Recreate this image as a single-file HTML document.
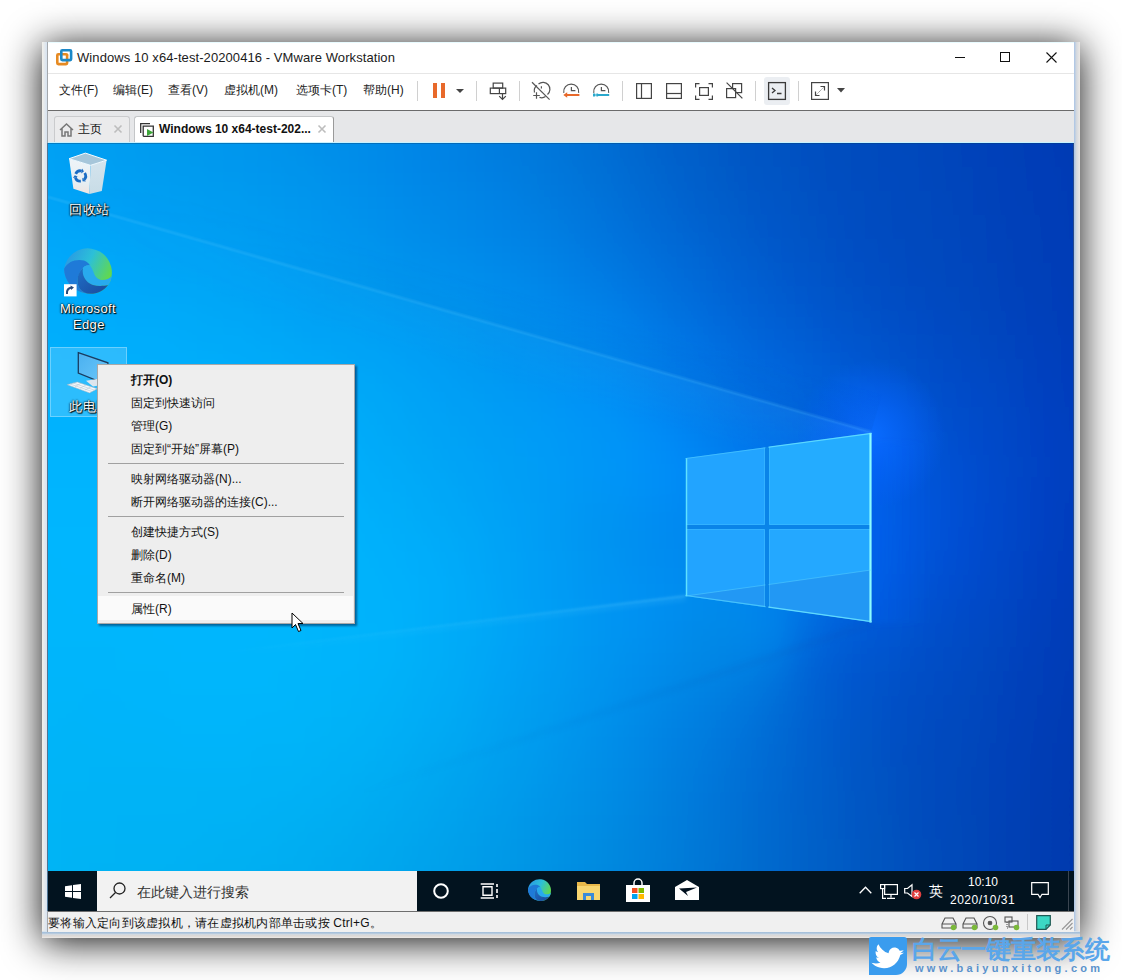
<!DOCTYPE html>
<html><head><meta charset="utf-8">
<style>
*{margin:0;padding:0;box-sizing:border-box}
html,body{width:1122px;height:980px;overflow:hidden;background:#fff;font-family:"Liberation Sans",sans-serif;color:#000;}
.a{position:absolute}
.t{position:absolute;white-space:nowrap;line-height:1}
svg{position:absolute;overflow:visible}
</style></head>
<body>
<div class="a" style="left:42px;top:42px;width:1038px;height:896px;box-shadow:0 4px 36px 0 rgba(0,0,0,0.95);"></div>
<!-- window frame -->
<div class="a" style="left:42px;top:42px;width:1038px;height:896px;background:#e9edf2;"></div>
<div class="a" style="left:42px;top:42px;width:5px;height:896px;background:linear-gradient(90deg,#f2f0ea,#d6e2f0);"></div>
<div class="a" style="left:1074px;top:42px;width:6px;height:896px;background:linear-gradient(90deg,#a9c4e6,#d3d8de 40%,#ece8e4);"></div>
<div class="a" style="left:42px;top:931px;width:1038px;height:7px;background:linear-gradient(180deg,#f0f4f8,#9ab8d6 25%,#cfd9e3 45%,#ddd8d4 70%,#ebe9e7);"></div>
<!-- title bar -->
<div class="a" style="left:47px;top:42px;width:1027px;height:31px;background:#fff;border-top:1px solid #e8fbff;"></div>
<svg style="left:55px;top:48px" width="19" height="19" viewBox="0 0 19 19">
  <rect x="2.3" y="6.3" width="9.8" height="9.8" rx="1" fill="none" stroke="#e68a22" stroke-width="2.6"/>
  <rect x="6.3" y="2.3" width="9.8" height="9.8" rx="1" fill="none" stroke="#1b88c8" stroke-width="2.6"/>
  <path d="M12.1 6.3 V7.5" stroke="#e68a22" stroke-width="2.6"/>
</svg>
<div class="t" style="left:77px;top:51px;font-size:13px;letter-spacing:0.08px;color:#1b1b1b;">Windows 10 x64-test-20200416 - VMware Workstation</div>
<div class="a" style="left:955px;top:57px;width:10px;height:1px;background:#111;"></div>
<div class="a" style="left:1000px;top:52px;width:10px;height:10px;border:1px solid #111;"></div>
<svg style="left:1046px;top:52px" width="11" height="11" viewBox="0 0 11 11"><path d="M0.5 0.5 L10.5 10.5 M10.5 0.5 L0.5 10.5" stroke="#111" stroke-width="1.1"/></svg>
<!-- toolbar -->
<div class="a" style="left:47px;top:73px;width:1027px;height:38px;background:#fff;border-top:1px solid #e6e6e6;border-bottom:1px solid #6b6b6b;"></div>
<div class="t" style="left:59px;top:84px;font-size:12px;color:#222;">文件(F)</div>
<div class="t" style="left:113px;top:84px;font-size:12px;color:#222;">编辑(E)</div>
<div class="t" style="left:168px;top:84px;font-size:12px;color:#222;">查看(V)</div>
<div class="t" style="left:224px;top:84px;font-size:12px;color:#222;">虚拟机(M)</div>
<div class="t" style="left:296px;top:84px;font-size:12px;color:#222;">选项卡(T)</div>
<div class="t" style="left:363px;top:84px;font-size:12px;color:#222;">帮助(H)</div>
<div class="a" style="left:417px;top:81px;width:1px;height:20px;background:#d0d0d0;"></div>
<div class="a" style="left:433px;top:83px;width:4px;height:15px;background:#e8692a;"></div>
<div class="a" style="left:441px;top:83px;width:4px;height:15px;background:#e8692a;"></div>
<svg style="left:456px;top:89px" width="8" height="4" viewBox="0 0 8 4"><path d="M0 0 H8 L4 4z" fill="#444"/></svg>
<div class="a" style="left:476px;top:81px;width:1px;height:20px;background:#d0d0d0;"></div>
<svg style="left:486px;top:80px" width="22" height="22" viewBox="0 0 22 22" fill="none" stroke="#444" stroke-width="1.2">
  <rect x="7.2" y="3.1" width="9.5" height="5"/><rect x="4.3" y="8.1" width="15.4" height="5.5"/><path d="M13.4 8.1 V13.6 M16.5 13.6 V19.7 M13.2 16.2 L16.5 19.5 L19.8 16.2"/>
</svg>
<div class="a" style="left:519px;top:81px;width:1px;height:20px;background:#d0d0d0;"></div>
<svg style="left:528px;top:78px" width="26" height="24" viewBox="0 0 26 24" fill="none" stroke="#555" stroke-width="1.2">
  <path d="M6.5 14.5 A6.6 6.6 0 0 1 9 7.5 M10.5 6 A6.6 6.6 0 0 1 19.5 16.5 M17.5 18.6 A6.6 6.6 0 0 1 11.5 19.4"/><path d="M13.4 8.3 V10.5 M16.2 13.4 L16.3 13.4"/><path d="M8.5 14.2 V20.8 M5.2 17.5 H11.8"/><path d="M4 4.2 L21.6 21.6"/>
</svg>
<svg style="left:562px;top:83px" width="18" height="16" viewBox="0 0 18 16" fill="none">
  <path d="M1.8 9.8 A7.5 7.5 0 1 1 16.6 9.8" stroke="#555" stroke-width="1.2"/><path d="M9.4 4 V7.7 H13.4" stroke="#555" stroke-width="1.2"/>
  <path d="M1.3 12 L5.2 9.2 V10.9 H17.4 V13.1 H5.2 V14.8z" fill="#e8692a"/>
</svg>
<svg style="left:592px;top:83px" width="18" height="16" viewBox="0 0 18 16" fill="none">
  <path d="M1.8 9.8 A7.5 7.5 0 1 1 16.6 9.8" stroke="#555" stroke-width="1.2"/><path d="M9.4 4 V7.7 H13.4" stroke="#555" stroke-width="1.2"/>
  <path d="M1 10.4 H3.2 V11.6 H4.4 V10.6 H5.6 L6.4 10.9 H17.2 V13.1 H6.4 L5.6 13.4 H4.4 V12.4 H3.2 V13.6 H1z" fill="#2aa8cc"/>
</svg>
<div class="a" style="left:622px;top:81px;width:1px;height:20px;background:#d0d0d0;"></div>
<svg style="left:636px;top:83px" width="16" height="16" viewBox="0 0 16 16" fill="none" stroke="#444" stroke-width="1.2"><rect x="0.6" y="0.6" width="14.8" height="14.8"/><path d="M5.5 0.6 V15.4"/></svg>
<svg style="left:666px;top:83px" width="16" height="16" viewBox="0 0 16 16" fill="none" stroke="#444" stroke-width="1.2"><rect x="0.6" y="0.6" width="14.8" height="14.8"/><path d="M0.6 10.5 H15.4"/></svg>
<svg style="left:695px;top:83px" width="18" height="17" viewBox="0 0 18 17" fill="none" stroke="#444" stroke-width="1.2"><path d="M0.6 4.5 V0.6 H4.5 M13.5 0.6 H17.4 V4.5 M17.4 12.5 V16.4 H13.5 M4.5 16.4 H0.6 V12.5"/><rect x="4.6" y="4.6" width="8.8" height="7.8"/></svg>
<svg style="left:726px;top:82px" width="17" height="17" viewBox="0 0 17 17" fill="none" stroke="#444" stroke-width="1.2"><rect x="6.6" y="1.6" width="9" height="9"/><rect x="0.6" y="6.6" width="9" height="9" fill="#fff"/><path d="M0.6 0.6 L16.4 16.4"/></svg>
<div class="a" style="left:755px;top:81px;width:1px;height:20px;background:#d0d0d0;"></div>
<div class="a" style="left:764px;top:77px;width:26px;height:28px;background:#ebeef2;border-radius:3px;"></div>
<svg style="left:768px;top:82px" width="18" height="18" viewBox="0 0 18 18" fill="none" stroke="#3a3a3a" stroke-width="1.3"><rect x="0.6" y="0.6" width="16.8" height="16.8"/><path d="M4 6 L7 8.5 L4 11 M9 11.5 H13.5"/></svg>
<div class="a" style="left:798px;top:81px;width:1px;height:20px;background:#d0d0d0;"></div>
<svg style="left:811px;top:82px" width="18" height="18" viewBox="0 0 18 18" fill="none" stroke="#444" stroke-width="1.2"><rect x="0.6" y="0.6" width="16.8" height="16.8"/><path d="M5.5 12.5 L12.5 5.5" stroke="#888" stroke-width="1" stroke-dasharray="1.2 0.6"/><path d="M9.5 4.5 H13.5 V8.5 M4.5 9.5 V13.5 H8.5"/></svg>
<svg style="left:837px;top:88px" width="8" height="5" viewBox="0 0 8 5"><path d="M0 0 H8 L4 4.5z" fill="#444"/></svg>
<!-- tab strip -->
<div class="a" style="left:47px;top:111px;width:1027px;height:32px;background:#e6e7e9;"></div>
<div class="a" style="left:54px;top:116px;width:76px;height:27px;background:#ebebec;border:1px solid #cacbcd;border-bottom:none;border-radius:3px 3px 0 0;"></div>
<svg style="left:59px;top:123px" width="15" height="14" viewBox="0 0 15 14" fill="none" stroke="#777" stroke-width="1.5"><path d="M1 7 L7.5 1 L14 7 M3 5.5 V13 H6 V9 H9 V13 H12 V5.5"/></svg>
<div class="t" style="left:78px;top:123px;font-size:12px;color:#111;">主页</div>
<svg style="left:114px;top:125px" width="8" height="8" viewBox="0 0 8 8"><path d="M0.5 0.5 L7.5 7.5 M7.5 0.5 L0.5 7.5" stroke="#bdbdbd" stroke-width="1.6"/></svg>
<div class="a" style="left:134px;top:116px;width:200px;height:27px;background:#fff;border:1px solid #c4c6c8;border-right-color:#9a9a9a;border-bottom:none;border-radius:3px 3px 0 0;"></div>
<svg style="left:140px;top:123px" width="15" height="14" viewBox="0 0 15 14" fill="none"><path d="M0.7 10 V0.7 H10" stroke="#333" stroke-width="1.3"/><path d="M3.2 13.3 V3.2 H13.3 V13.3 H3.2" stroke="#333" stroke-width="1.3"/><path d="M7 6 L13.5 9.5 L7 13z" fill="#3da53a"/></svg>
<div class="t" style="left:159px;top:123px;font-size:12px;font-weight:bold;color:#111;">Windows 10 x64-test-202...</div>
<svg style="left:318px;top:125px" width="8" height="8" viewBox="0 0 8 8"><path d="M0.5 0.5 L7.5 7.5 M7.5 0.5 L0.5 7.5" stroke="#bdbdbd" stroke-width="1.6"/></svg>

<div class="a" style="left:47px;top:42px;width:1px;height:101px;background:#a4a8ac;"></div>
<div class="a" style="left:47px;top:143px;width:1px;height:768px;background:#4f7594;"></div>
<div class="a" style="left:47px;top:911px;width:1px;height:21px;background:#a4a8ac;"></div>
<div class="a" style="left:48px;top:143px;width:1026px;height:728px;overflow:hidden;">
<svg width="1026" height="728" viewBox="0 0 1026 728" style="left:0;top:0">
<defs><linearGradient id="r0" gradientUnits="userSpaceOnUse" x1="0" y1="0" x2="1026" y2="0"><stop offset="0.000" stop-color="#01a0f4"/><stop offset="0.026" stop-color="#009ff2"/><stop offset="0.053" stop-color="#009df1"/><stop offset="0.079" stop-color="#009cf0"/><stop offset="0.105" stop-color="#009aee"/><stop offset="0.132" stop-color="#0099ed"/><stop offset="0.158" stop-color="#0097ed"/><stop offset="0.184" stop-color="#0096ec"/><stop offset="0.211" stop-color="#0094eb"/><stop offset="0.237" stop-color="#0092ea"/><stop offset="0.263" stop-color="#008fe9"/><stop offset="0.289" stop-color="#008de9"/><stop offset="0.316" stop-color="#018ae8"/><stop offset="0.342" stop-color="#0187e7"/><stop offset="0.368" stop-color="#0184e5"/><stop offset="0.395" stop-color="#0181e3"/><stop offset="0.421" stop-color="#007ee0"/><stop offset="0.447" stop-color="#007bde"/><stop offset="0.474" stop-color="#0078db"/><stop offset="0.500" stop-color="#0074d8"/><stop offset="0.526" stop-color="#006fd5"/><stop offset="0.553" stop-color="#016bd1"/><stop offset="0.579" stop-color="#0266ce"/><stop offset="0.605" stop-color="#0362cb"/><stop offset="0.632" stop-color="#035dc8"/><stop offset="0.658" stop-color="#0359c5"/><stop offset="0.684" stop-color="#0356c3"/><stop offset="0.711" stop-color="#0353c1"/><stop offset="0.737" stop-color="#0250c0"/><stop offset="0.763" stop-color="#034dbf"/><stop offset="0.789" stop-color="#034bbd"/><stop offset="0.816" stop-color="#0349bc"/><stop offset="0.842" stop-color="#0447bb"/><stop offset="0.868" stop-color="#0445ba"/><stop offset="0.895" stop-color="#0443b9"/><stop offset="0.921" stop-color="#0441b8"/><stop offset="0.947" stop-color="#043eb7"/><stop offset="0.974" stop-color="#043cb6"/><stop offset="1.000" stop-color="#0439b4"/></linearGradient><linearGradient id="r1" gradientUnits="userSpaceOnUse" x1="0" y1="0" x2="1026" y2="0"><stop offset="0.000" stop-color="#01a0f4"/><stop offset="0.026" stop-color="#009ff2"/><stop offset="0.053" stop-color="#009df1"/><stop offset="0.079" stop-color="#009cf0"/><stop offset="0.105" stop-color="#009aee"/><stop offset="0.132" stop-color="#0099ed"/><stop offset="0.158" stop-color="#0097ed"/><stop offset="0.184" stop-color="#0096ec"/><stop offset="0.211" stop-color="#0094eb"/><stop offset="0.237" stop-color="#0092ea"/><stop offset="0.263" stop-color="#008fe9"/><stop offset="0.289" stop-color="#008de9"/><stop offset="0.316" stop-color="#018ae8"/><stop offset="0.342" stop-color="#0187e7"/><stop offset="0.368" stop-color="#0184e5"/><stop offset="0.395" stop-color="#0181e3"/><stop offset="0.421" stop-color="#007ee0"/><stop offset="0.447" stop-color="#007bde"/><stop offset="0.474" stop-color="#0078db"/><stop offset="0.500" stop-color="#0074d8"/><stop offset="0.526" stop-color="#006fd5"/><stop offset="0.553" stop-color="#016bd1"/><stop offset="0.579" stop-color="#0266ce"/><stop offset="0.605" stop-color="#0362cb"/><stop offset="0.632" stop-color="#035dc8"/><stop offset="0.658" stop-color="#0359c5"/><stop offset="0.684" stop-color="#0356c3"/><stop offset="0.711" stop-color="#0353c1"/><stop offset="0.737" stop-color="#0250c0"/><stop offset="0.763" stop-color="#034dbf"/><stop offset="0.789" stop-color="#034bbd"/><stop offset="0.816" stop-color="#0349bc"/><stop offset="0.842" stop-color="#0447bb"/><stop offset="0.868" stop-color="#0445ba"/><stop offset="0.895" stop-color="#0443b9"/><stop offset="0.921" stop-color="#0441b8"/><stop offset="0.947" stop-color="#043eb7"/><stop offset="0.974" stop-color="#043cb6"/><stop offset="1.000" stop-color="#0439b4"/></linearGradient><linearGradient id="r2" gradientUnits="userSpaceOnUse" x1="0" y1="0" x2="1026" y2="0"><stop offset="0.000" stop-color="#01a1f4"/><stop offset="0.026" stop-color="#009ff3"/><stop offset="0.053" stop-color="#009ef2"/><stop offset="0.079" stop-color="#009df0"/><stop offset="0.105" stop-color="#009bef"/><stop offset="0.132" stop-color="#009aee"/><stop offset="0.158" stop-color="#0098ee"/><stop offset="0.184" stop-color="#0097ed"/><stop offset="0.211" stop-color="#0095ec"/><stop offset="0.237" stop-color="#0093eb"/><stop offset="0.263" stop-color="#0090ea"/><stop offset="0.289" stop-color="#008ee9"/><stop offset="0.316" stop-color="#018be8"/><stop offset="0.342" stop-color="#0188e7"/><stop offset="0.368" stop-color="#0185e6"/><stop offset="0.395" stop-color="#0182e4"/><stop offset="0.421" stop-color="#007fe1"/><stop offset="0.447" stop-color="#007cdf"/><stop offset="0.474" stop-color="#0079dc"/><stop offset="0.500" stop-color="#0075d9"/><stop offset="0.526" stop-color="#0071d6"/><stop offset="0.553" stop-color="#016cd3"/><stop offset="0.579" stop-color="#0267cf"/><stop offset="0.605" stop-color="#0362cc"/><stop offset="0.632" stop-color="#035ec9"/><stop offset="0.658" stop-color="#035ac6"/><stop offset="0.684" stop-color="#0356c4"/><stop offset="0.711" stop-color="#0253c2"/><stop offset="0.737" stop-color="#0250c1"/><stop offset="0.763" stop-color="#024ebf"/><stop offset="0.789" stop-color="#034cbe"/><stop offset="0.816" stop-color="#034abd"/><stop offset="0.842" stop-color="#0448bc"/><stop offset="0.868" stop-color="#0446bb"/><stop offset="0.895" stop-color="#0443ba"/><stop offset="0.921" stop-color="#0441b9"/><stop offset="0.947" stop-color="#043fb7"/><stop offset="0.974" stop-color="#043cb6"/><stop offset="1.000" stop-color="#043ab4"/></linearGradient><linearGradient id="r3" gradientUnits="userSpaceOnUse" x1="0" y1="0" x2="1026" y2="0"><stop offset="0.000" stop-color="#01a3f6"/><stop offset="0.026" stop-color="#01a1f5"/><stop offset="0.053" stop-color="#01a0f3"/><stop offset="0.079" stop-color="#009ef2"/><stop offset="0.105" stop-color="#009df1"/><stop offset="0.132" stop-color="#009cf0"/><stop offset="0.158" stop-color="#009aef"/><stop offset="0.184" stop-color="#0099ef"/><stop offset="0.211" stop-color="#0097ee"/><stop offset="0.237" stop-color="#0095ec"/><stop offset="0.263" stop-color="#0093eb"/><stop offset="0.289" stop-color="#0190eb"/><stop offset="0.316" stop-color="#018dea"/><stop offset="0.342" stop-color="#028ae9"/><stop offset="0.368" stop-color="#0187e7"/><stop offset="0.395" stop-color="#0184e5"/><stop offset="0.421" stop-color="#0181e3"/><stop offset="0.447" stop-color="#007ee1"/><stop offset="0.474" stop-color="#007bde"/><stop offset="0.500" stop-color="#0077db"/><stop offset="0.526" stop-color="#0073d8"/><stop offset="0.553" stop-color="#016ed5"/><stop offset="0.579" stop-color="#0269d1"/><stop offset="0.605" stop-color="#0364ce"/><stop offset="0.632" stop-color="#035fcb"/><stop offset="0.658" stop-color="#035bc8"/><stop offset="0.684" stop-color="#0357c6"/><stop offset="0.711" stop-color="#0254c4"/><stop offset="0.737" stop-color="#0251c2"/><stop offset="0.763" stop-color="#024ec0"/><stop offset="0.789" stop-color="#034cbf"/><stop offset="0.816" stop-color="#034abe"/><stop offset="0.842" stop-color="#0348bd"/><stop offset="0.868" stop-color="#0446bb"/><stop offset="0.895" stop-color="#0444ba"/><stop offset="0.921" stop-color="#0442b9"/><stop offset="0.947" stop-color="#043fb8"/><stop offset="0.974" stop-color="#033db7"/><stop offset="1.000" stop-color="#033ab5"/></linearGradient><linearGradient id="r4" gradientUnits="userSpaceOnUse" x1="0" y1="0" x2="1026" y2="0"><stop offset="0.000" stop-color="#01a4f7"/><stop offset="0.026" stop-color="#01a3f6"/><stop offset="0.053" stop-color="#01a2f5"/><stop offset="0.079" stop-color="#01a0f4"/><stop offset="0.105" stop-color="#009ff3"/><stop offset="0.132" stop-color="#009ef2"/><stop offset="0.158" stop-color="#019cf1"/><stop offset="0.184" stop-color="#019bf0"/><stop offset="0.211" stop-color="#0199ef"/><stop offset="0.237" stop-color="#0197ee"/><stop offset="0.263" stop-color="#0195ed"/><stop offset="0.289" stop-color="#0192ec"/><stop offset="0.316" stop-color="#018feb"/><stop offset="0.342" stop-color="#028cea"/><stop offset="0.368" stop-color="#0189e8"/><stop offset="0.395" stop-color="#0187e7"/><stop offset="0.421" stop-color="#0184e5"/><stop offset="0.447" stop-color="#0081e3"/><stop offset="0.474" stop-color="#007de0"/><stop offset="0.500" stop-color="#0079de"/><stop offset="0.526" stop-color="#0075db"/><stop offset="0.553" stop-color="#0170d8"/><stop offset="0.579" stop-color="#026bd4"/><stop offset="0.605" stop-color="#0366d1"/><stop offset="0.632" stop-color="#0361cd"/><stop offset="0.658" stop-color="#035dca"/><stop offset="0.684" stop-color="#0259c8"/><stop offset="0.711" stop-color="#0255c6"/><stop offset="0.737" stop-color="#0252c3"/><stop offset="0.763" stop-color="#024fc2"/><stop offset="0.789" stop-color="#024dc0"/><stop offset="0.816" stop-color="#034bbf"/><stop offset="0.842" stop-color="#0349bd"/><stop offset="0.868" stop-color="#0447bc"/><stop offset="0.895" stop-color="#0444bb"/><stop offset="0.921" stop-color="#0442b9"/><stop offset="0.947" stop-color="#0340b8"/><stop offset="0.974" stop-color="#033db7"/><stop offset="1.000" stop-color="#033bb5"/></linearGradient><linearGradient id="r5" gradientUnits="userSpaceOnUse" x1="0" y1="0" x2="1026" y2="0"><stop offset="0.000" stop-color="#02a6f9"/><stop offset="0.026" stop-color="#02a5f8"/><stop offset="0.053" stop-color="#01a4f7"/><stop offset="0.079" stop-color="#01a3f6"/><stop offset="0.105" stop-color="#01a1f5"/><stop offset="0.132" stop-color="#01a0f4"/><stop offset="0.158" stop-color="#019ff3"/><stop offset="0.184" stop-color="#019df2"/><stop offset="0.211" stop-color="#019bf1"/><stop offset="0.237" stop-color="#0199f0"/><stop offset="0.263" stop-color="#0197ef"/><stop offset="0.289" stop-color="#0194ed"/><stop offset="0.316" stop-color="#0191ec"/><stop offset="0.342" stop-color="#028eeb"/><stop offset="0.368" stop-color="#018ce9"/><stop offset="0.395" stop-color="#0189e8"/><stop offset="0.421" stop-color="#0186e7"/><stop offset="0.447" stop-color="#0083e5"/><stop offset="0.474" stop-color="#0080e3"/><stop offset="0.500" stop-color="#007ce0"/><stop offset="0.526" stop-color="#0177de"/><stop offset="0.553" stop-color="#0172db"/><stop offset="0.579" stop-color="#026dd7"/><stop offset="0.605" stop-color="#0368d4"/><stop offset="0.632" stop-color="#0363d0"/><stop offset="0.658" stop-color="#035fcd"/><stop offset="0.684" stop-color="#025aca"/><stop offset="0.711" stop-color="#0256c8"/><stop offset="0.737" stop-color="#0253c5"/><stop offset="0.763" stop-color="#0250c3"/><stop offset="0.789" stop-color="#024dc1"/><stop offset="0.816" stop-color="#034bbf"/><stop offset="0.842" stop-color="#0349be"/><stop offset="0.868" stop-color="#0347bd"/><stop offset="0.895" stop-color="#0445bb"/><stop offset="0.921" stop-color="#0443ba"/><stop offset="0.947" stop-color="#0340b9"/><stop offset="0.974" stop-color="#033eb7"/><stop offset="1.000" stop-color="#033bb6"/></linearGradient><linearGradient id="r6" gradientUnits="userSpaceOnUse" x1="0" y1="0" x2="1026" y2="0"><stop offset="0.000" stop-color="#02a8fa"/><stop offset="0.026" stop-color="#02a7f9"/><stop offset="0.053" stop-color="#01a6f8"/><stop offset="0.079" stop-color="#01a5f7"/><stop offset="0.105" stop-color="#01a4f6"/><stop offset="0.132" stop-color="#00a3f5"/><stop offset="0.158" stop-color="#01a1f5"/><stop offset="0.184" stop-color="#01a0f4"/><stop offset="0.211" stop-color="#019ef3"/><stop offset="0.237" stop-color="#019cf2"/><stop offset="0.263" stop-color="#0199f0"/><stop offset="0.289" stop-color="#0197ef"/><stop offset="0.316" stop-color="#0194ed"/><stop offset="0.342" stop-color="#0291ec"/><stop offset="0.368" stop-color="#018eeb"/><stop offset="0.395" stop-color="#018cea"/><stop offset="0.421" stop-color="#0189e9"/><stop offset="0.447" stop-color="#0186e7"/><stop offset="0.474" stop-color="#0183e5"/><stop offset="0.500" stop-color="#017fe3"/><stop offset="0.526" stop-color="#017ae1"/><stop offset="0.553" stop-color="#0275de"/><stop offset="0.579" stop-color="#0270db"/><stop offset="0.605" stop-color="#036bd7"/><stop offset="0.632" stop-color="#0366d4"/><stop offset="0.658" stop-color="#0361d0"/><stop offset="0.684" stop-color="#035ccd"/><stop offset="0.711" stop-color="#0258ca"/><stop offset="0.737" stop-color="#0254c7"/><stop offset="0.763" stop-color="#0251c5"/><stop offset="0.789" stop-color="#034ec3"/><stop offset="0.816" stop-color="#034cc1"/><stop offset="0.842" stop-color="#034abf"/><stop offset="0.868" stop-color="#0348bd"/><stop offset="0.895" stop-color="#0445bc"/><stop offset="0.921" stop-color="#0443ba"/><stop offset="0.947" stop-color="#0341b9"/><stop offset="0.974" stop-color="#033eb7"/><stop offset="1.000" stop-color="#033bb6"/></linearGradient><linearGradient id="r7" gradientUnits="userSpaceOnUse" x1="0" y1="0" x2="1026" y2="0"><stop offset="0.000" stop-color="#02aafb"/><stop offset="0.026" stop-color="#02a9fa"/><stop offset="0.053" stop-color="#01a8f9"/><stop offset="0.079" stop-color="#01a7f9"/><stop offset="0.105" stop-color="#00a6f8"/><stop offset="0.132" stop-color="#00a5f7"/><stop offset="0.158" stop-color="#00a4f6"/><stop offset="0.184" stop-color="#01a2f5"/><stop offset="0.211" stop-color="#01a1f4"/><stop offset="0.237" stop-color="#019ef3"/><stop offset="0.263" stop-color="#019cf2"/><stop offset="0.289" stop-color="#019af0"/><stop offset="0.316" stop-color="#0197ef"/><stop offset="0.342" stop-color="#0294ed"/><stop offset="0.368" stop-color="#0192ec"/><stop offset="0.395" stop-color="#018fec"/><stop offset="0.421" stop-color="#018deb"/><stop offset="0.447" stop-color="#018aea"/><stop offset="0.474" stop-color="#0186e8"/><stop offset="0.500" stop-color="#0182e6"/><stop offset="0.526" stop-color="#017de4"/><stop offset="0.553" stop-color="#0279e1"/><stop offset="0.579" stop-color="#0273de"/><stop offset="0.605" stop-color="#036edb"/><stop offset="0.632" stop-color="#0369d7"/><stop offset="0.658" stop-color="#0363d4"/><stop offset="0.684" stop-color="#035fd0"/><stop offset="0.711" stop-color="#035acd"/><stop offset="0.737" stop-color="#0356ca"/><stop offset="0.763" stop-color="#0352c7"/><stop offset="0.789" stop-color="#034fc4"/><stop offset="0.816" stop-color="#034dc2"/><stop offset="0.842" stop-color="#034ac0"/><stop offset="0.868" stop-color="#0448bf"/><stop offset="0.895" stop-color="#0446bd"/><stop offset="0.921" stop-color="#0444bb"/><stop offset="0.947" stop-color="#0341b9"/><stop offset="0.974" stop-color="#033fb8"/><stop offset="1.000" stop-color="#033cb7"/></linearGradient><linearGradient id="r8" gradientUnits="userSpaceOnUse" x1="0" y1="0" x2="1026" y2="0"><stop offset="0.000" stop-color="#02abfc"/><stop offset="0.026" stop-color="#01abfb"/><stop offset="0.053" stop-color="#01aafa"/><stop offset="0.079" stop-color="#01a9fa"/><stop offset="0.105" stop-color="#00a9f9"/><stop offset="0.132" stop-color="#00a8f8"/><stop offset="0.158" stop-color="#00a7f7"/><stop offset="0.184" stop-color="#00a5f6"/><stop offset="0.211" stop-color="#01a3f6"/><stop offset="0.237" stop-color="#01a1f5"/><stop offset="0.263" stop-color="#019ff3"/><stop offset="0.289" stop-color="#019df2"/><stop offset="0.316" stop-color="#019bf1"/><stop offset="0.342" stop-color="#0298f0"/><stop offset="0.368" stop-color="#0195ef"/><stop offset="0.395" stop-color="#0193ee"/><stop offset="0.421" stop-color="#0190ed"/><stop offset="0.447" stop-color="#018dec"/><stop offset="0.474" stop-color="#018aeb"/><stop offset="0.500" stop-color="#0186e9"/><stop offset="0.526" stop-color="#0281e7"/><stop offset="0.553" stop-color="#027ce5"/><stop offset="0.579" stop-color="#0277e2"/><stop offset="0.605" stop-color="#0371de"/><stop offset="0.632" stop-color="#036cdb"/><stop offset="0.658" stop-color="#0366d7"/><stop offset="0.684" stop-color="#0361d4"/><stop offset="0.711" stop-color="#035cd0"/><stop offset="0.737" stop-color="#0358cd"/><stop offset="0.763" stop-color="#0354c9"/><stop offset="0.789" stop-color="#0451c7"/><stop offset="0.816" stop-color="#044ec4"/><stop offset="0.842" stop-color="#044cc2"/><stop offset="0.868" stop-color="#0449c0"/><stop offset="0.895" stop-color="#0447be"/><stop offset="0.921" stop-color="#0444bc"/><stop offset="0.947" stop-color="#0342ba"/><stop offset="0.974" stop-color="#033fb9"/><stop offset="1.000" stop-color="#033cb7"/></linearGradient><linearGradient id="r9" gradientUnits="userSpaceOnUse" x1="0" y1="0" x2="1026" y2="0"><stop offset="0.000" stop-color="#01adfc"/><stop offset="0.026" stop-color="#01acfc"/><stop offset="0.053" stop-color="#01acfb"/><stop offset="0.079" stop-color="#00abfb"/><stop offset="0.105" stop-color="#00abfa"/><stop offset="0.132" stop-color="#00aaf9"/><stop offset="0.158" stop-color="#00a9f8"/><stop offset="0.184" stop-color="#00a8f8"/><stop offset="0.211" stop-color="#00a6f7"/><stop offset="0.237" stop-color="#01a4f6"/><stop offset="0.263" stop-color="#01a2f5"/><stop offset="0.289" stop-color="#01a1f4"/><stop offset="0.316" stop-color="#019ff4"/><stop offset="0.342" stop-color="#029cf3"/><stop offset="0.368" stop-color="#029af2"/><stop offset="0.395" stop-color="#0197f0"/><stop offset="0.421" stop-color="#0194ef"/><stop offset="0.447" stop-color="#0191ef"/><stop offset="0.474" stop-color="#018dee"/><stop offset="0.500" stop-color="#018aed"/><stop offset="0.526" stop-color="#0286eb"/><stop offset="0.553" stop-color="#0281e9"/><stop offset="0.579" stop-color="#037be6"/><stop offset="0.605" stop-color="#0375e2"/><stop offset="0.632" stop-color="#036fdf"/><stop offset="0.658" stop-color="#0369db"/><stop offset="0.684" stop-color="#0464d7"/><stop offset="0.711" stop-color="#045fd4"/><stop offset="0.737" stop-color="#045bd0"/><stop offset="0.763" stop-color="#0456cd"/><stop offset="0.789" stop-color="#0453ca"/><stop offset="0.816" stop-color="#0450c7"/><stop offset="0.842" stop-color="#044dc5"/><stop offset="0.868" stop-color="#044ac2"/><stop offset="0.895" stop-color="#0448c0"/><stop offset="0.921" stop-color="#0445be"/><stop offset="0.947" stop-color="#0342bc"/><stop offset="0.974" stop-color="#0340ba"/><stop offset="1.000" stop-color="#033cb8"/></linearGradient><linearGradient id="r10" gradientUnits="userSpaceOnUse" x1="0" y1="0" x2="1026" y2="0"><stop offset="0.000" stop-color="#01affd"/><stop offset="0.026" stop-color="#01aefc"/><stop offset="0.053" stop-color="#01aefc"/><stop offset="0.079" stop-color="#00adfb"/><stop offset="0.105" stop-color="#00adfb"/><stop offset="0.132" stop-color="#00acfa"/><stop offset="0.158" stop-color="#00abf9"/><stop offset="0.184" stop-color="#00aaf9"/><stop offset="0.211" stop-color="#00a9f8"/><stop offset="0.237" stop-color="#00a7f7"/><stop offset="0.263" stop-color="#01a5f7"/><stop offset="0.289" stop-color="#01a4f6"/><stop offset="0.316" stop-color="#01a2f5"/><stop offset="0.342" stop-color="#01a0f5"/><stop offset="0.368" stop-color="#029df4"/><stop offset="0.395" stop-color="#029af2"/><stop offset="0.421" stop-color="#0297f1"/><stop offset="0.447" stop-color="#0194f1"/><stop offset="0.474" stop-color="#0191f0"/><stop offset="0.500" stop-color="#028ef0"/><stop offset="0.526" stop-color="#028aef"/><stop offset="0.553" stop-color="#0285ed"/><stop offset="0.579" stop-color="#0380ea"/><stop offset="0.605" stop-color="#0379e6"/><stop offset="0.632" stop-color="#0373e3"/><stop offset="0.658" stop-color="#046ddf"/><stop offset="0.684" stop-color="#0467db"/><stop offset="0.711" stop-color="#0462d8"/><stop offset="0.737" stop-color="#045ed4"/><stop offset="0.763" stop-color="#0459d1"/><stop offset="0.789" stop-color="#0455ce"/><stop offset="0.816" stop-color="#0452cb"/><stop offset="0.842" stop-color="#044fc8"/><stop offset="0.868" stop-color="#044cc5"/><stop offset="0.895" stop-color="#0449c2"/><stop offset="0.921" stop-color="#0446c0"/><stop offset="0.947" stop-color="#0443be"/><stop offset="0.974" stop-color="#0340bc"/><stop offset="1.000" stop-color="#033dba"/></linearGradient><linearGradient id="r11" gradientUnits="userSpaceOnUse" x1="0" y1="0" x2="1026" y2="0"><stop offset="0.000" stop-color="#01b0fd"/><stop offset="0.026" stop-color="#01b0fd"/><stop offset="0.053" stop-color="#01affd"/><stop offset="0.079" stop-color="#00affc"/><stop offset="0.105" stop-color="#00aefb"/><stop offset="0.132" stop-color="#00aefb"/><stop offset="0.158" stop-color="#00adfa"/><stop offset="0.184" stop-color="#00acfa"/><stop offset="0.211" stop-color="#00abf9"/><stop offset="0.237" stop-color="#00a9f9"/><stop offset="0.263" stop-color="#01a8f8"/><stop offset="0.289" stop-color="#01a6f7"/><stop offset="0.316" stop-color="#01a5f7"/><stop offset="0.342" stop-color="#01a2f6"/><stop offset="0.368" stop-color="#02a0f5"/><stop offset="0.395" stop-color="#029df4"/><stop offset="0.421" stop-color="#029af3"/><stop offset="0.447" stop-color="#0297f3"/><stop offset="0.474" stop-color="#0195f3"/><stop offset="0.500" stop-color="#0192f2"/><stop offset="0.526" stop-color="#028ef2"/><stop offset="0.553" stop-color="#028af1"/><stop offset="0.579" stop-color="#0284ee"/><stop offset="0.605" stop-color="#037eeb"/><stop offset="0.632" stop-color="#0377e7"/><stop offset="0.658" stop-color="#0471e3"/><stop offset="0.684" stop-color="#046bdf"/><stop offset="0.711" stop-color="#0466dc"/><stop offset="0.737" stop-color="#0461d8"/><stop offset="0.763" stop-color="#045cd5"/><stop offset="0.789" stop-color="#0458d2"/><stop offset="0.816" stop-color="#0454ce"/><stop offset="0.842" stop-color="#0451cb"/><stop offset="0.868" stop-color="#044dc8"/><stop offset="0.895" stop-color="#044ac5"/><stop offset="0.921" stop-color="#0447c2"/><stop offset="0.947" stop-color="#0444c0"/><stop offset="0.974" stop-color="#0340be"/><stop offset="1.000" stop-color="#033dbb"/></linearGradient><linearGradient id="r12" gradientUnits="userSpaceOnUse" x1="0" y1="0" x2="1026" y2="0"><stop offset="0.000" stop-color="#01b1fe"/><stop offset="0.026" stop-color="#01b1fd"/><stop offset="0.053" stop-color="#00b1fd"/><stop offset="0.079" stop-color="#00b0fd"/><stop offset="0.105" stop-color="#00b0fc"/><stop offset="0.132" stop-color="#00affc"/><stop offset="0.158" stop-color="#00affb"/><stop offset="0.184" stop-color="#00aefb"/><stop offset="0.211" stop-color="#00adfa"/><stop offset="0.237" stop-color="#00acfa"/><stop offset="0.263" stop-color="#01aaf9"/><stop offset="0.289" stop-color="#01a9f8"/><stop offset="0.316" stop-color="#01a7f7"/><stop offset="0.342" stop-color="#01a5f7"/><stop offset="0.368" stop-color="#01a2f6"/><stop offset="0.395" stop-color="#029ff5"/><stop offset="0.421" stop-color="#029df4"/><stop offset="0.447" stop-color="#019af4"/><stop offset="0.474" stop-color="#0198f4"/><stop offset="0.500" stop-color="#0195f5"/><stop offset="0.526" stop-color="#0192f5"/><stop offset="0.553" stop-color="#028ef4"/><stop offset="0.579" stop-color="#0289f2"/><stop offset="0.605" stop-color="#0382ef"/><stop offset="0.632" stop-color="#037ceb"/><stop offset="0.658" stop-color="#0475e7"/><stop offset="0.684" stop-color="#046fe4"/><stop offset="0.711" stop-color="#046ae0"/><stop offset="0.737" stop-color="#0464dd"/><stop offset="0.763" stop-color="#045fd9"/><stop offset="0.789" stop-color="#045bd6"/><stop offset="0.816" stop-color="#0456d2"/><stop offset="0.842" stop-color="#0453cf"/><stop offset="0.868" stop-color="#044fcb"/><stop offset="0.895" stop-color="#044bc8"/><stop offset="0.921" stop-color="#0448c5"/><stop offset="0.947" stop-color="#0444c2"/><stop offset="0.974" stop-color="#0441bf"/><stop offset="1.000" stop-color="#033dbd"/></linearGradient><linearGradient id="r13" gradientUnits="userSpaceOnUse" x1="0" y1="0" x2="1026" y2="0"><stop offset="0.000" stop-color="#01b2fe"/><stop offset="0.026" stop-color="#01b2fe"/><stop offset="0.053" stop-color="#00b2fd"/><stop offset="0.079" stop-color="#00b2fd"/><stop offset="0.105" stop-color="#00b1fd"/><stop offset="0.132" stop-color="#00b1fc"/><stop offset="0.158" stop-color="#00b0fc"/><stop offset="0.184" stop-color="#00b0fb"/><stop offset="0.211" stop-color="#00affb"/><stop offset="0.237" stop-color="#00aefa"/><stop offset="0.263" stop-color="#01acfa"/><stop offset="0.289" stop-color="#01abf9"/><stop offset="0.316" stop-color="#01a9f8"/><stop offset="0.342" stop-color="#01a6f7"/><stop offset="0.368" stop-color="#01a4f6"/><stop offset="0.395" stop-color="#02a1f5"/><stop offset="0.421" stop-color="#029ff5"/><stop offset="0.447" stop-color="#019cf5"/><stop offset="0.474" stop-color="#019af5"/><stop offset="0.500" stop-color="#0198f6"/><stop offset="0.526" stop-color="#0195f6"/><stop offset="0.553" stop-color="#0292f6"/><stop offset="0.579" stop-color="#028df5"/><stop offset="0.605" stop-color="#0287f3"/><stop offset="0.632" stop-color="#0380ef"/><stop offset="0.658" stop-color="#037aeb"/><stop offset="0.684" stop-color="#0373e8"/><stop offset="0.711" stop-color="#046de4"/><stop offset="0.737" stop-color="#0467e1"/><stop offset="0.763" stop-color="#0462dd"/><stop offset="0.789" stop-color="#045dda"/><stop offset="0.816" stop-color="#0458d6"/><stop offset="0.842" stop-color="#0454d2"/><stop offset="0.868" stop-color="#0450ce"/><stop offset="0.895" stop-color="#044dca"/><stop offset="0.921" stop-color="#0449c7"/><stop offset="0.947" stop-color="#0445c4"/><stop offset="0.974" stop-color="#0441c1"/><stop offset="1.000" stop-color="#033ebe"/></linearGradient><linearGradient id="r14" gradientUnits="userSpaceOnUse" x1="0" y1="0" x2="1026" y2="0"><stop offset="0.000" stop-color="#01b3fe"/><stop offset="0.026" stop-color="#01b3fe"/><stop offset="0.053" stop-color="#01b3fe"/><stop offset="0.079" stop-color="#00b3fd"/><stop offset="0.105" stop-color="#00b3fd"/><stop offset="0.132" stop-color="#00b2fd"/><stop offset="0.158" stop-color="#00b2fc"/><stop offset="0.184" stop-color="#00b1fc"/><stop offset="0.211" stop-color="#00b0fc"/><stop offset="0.237" stop-color="#00affb"/><stop offset="0.263" stop-color="#01aefa"/><stop offset="0.289" stop-color="#01acfa"/><stop offset="0.316" stop-color="#01aaf9"/><stop offset="0.342" stop-color="#01a8f7"/><stop offset="0.368" stop-color="#01a5f6"/><stop offset="0.395" stop-color="#02a3f5"/><stop offset="0.421" stop-color="#02a0f5"/><stop offset="0.447" stop-color="#019ef5"/><stop offset="0.474" stop-color="#019cf6"/><stop offset="0.500" stop-color="#0199f6"/><stop offset="0.526" stop-color="#0197f7"/><stop offset="0.553" stop-color="#0194f7"/><stop offset="0.579" stop-color="#0290f7"/><stop offset="0.605" stop-color="#028bf6"/><stop offset="0.632" stop-color="#0284f2"/><stop offset="0.658" stop-color="#037dee"/><stop offset="0.684" stop-color="#0377eb"/><stop offset="0.711" stop-color="#0371e8"/><stop offset="0.737" stop-color="#046be4"/><stop offset="0.763" stop-color="#0465e1"/><stop offset="0.789" stop-color="#045fde"/><stop offset="0.816" stop-color="#045ada"/><stop offset="0.842" stop-color="#0456d6"/><stop offset="0.868" stop-color="#0452d1"/><stop offset="0.895" stop-color="#044dcd"/><stop offset="0.921" stop-color="#0349c9"/><stop offset="0.947" stop-color="#0345c5"/><stop offset="0.974" stop-color="#0341c2"/><stop offset="1.000" stop-color="#033ebf"/></linearGradient><linearGradient id="r15" gradientUnits="userSpaceOnUse" x1="0" y1="0" x2="1026" y2="0"><stop offset="0.000" stop-color="#01b4fe"/><stop offset="0.026" stop-color="#01b4fe"/><stop offset="0.053" stop-color="#01b4fe"/><stop offset="0.079" stop-color="#00b4fe"/><stop offset="0.105" stop-color="#00b4fe"/><stop offset="0.132" stop-color="#00b3fd"/><stop offset="0.158" stop-color="#00b3fd"/><stop offset="0.184" stop-color="#00b2fd"/><stop offset="0.211" stop-color="#00b2fc"/><stop offset="0.237" stop-color="#01b1fc"/><stop offset="0.263" stop-color="#01affb"/><stop offset="0.289" stop-color="#01aefa"/><stop offset="0.316" stop-color="#01acf9"/><stop offset="0.342" stop-color="#01aaf8"/><stop offset="0.368" stop-color="#01a7f7"/><stop offset="0.395" stop-color="#01a4f6"/><stop offset="0.421" stop-color="#01a2f6"/><stop offset="0.447" stop-color="#019ff5"/><stop offset="0.474" stop-color="#019df5"/><stop offset="0.500" stop-color="#019af6"/><stop offset="0.526" stop-color="#0197f6"/><stop offset="0.553" stop-color="#0195f7"/><stop offset="0.579" stop-color="#0192f8"/><stop offset="0.605" stop-color="#028df7"/><stop offset="0.632" stop-color="#0287f4"/><stop offset="0.658" stop-color="#0280f0"/><stop offset="0.684" stop-color="#037aed"/><stop offset="0.711" stop-color="#0374ea"/><stop offset="0.737" stop-color="#036de7"/><stop offset="0.763" stop-color="#0367e4"/><stop offset="0.789" stop-color="#0461e1"/><stop offset="0.816" stop-color="#045cdd"/><stop offset="0.842" stop-color="#0457d9"/><stop offset="0.868" stop-color="#0452d4"/><stop offset="0.895" stop-color="#034ecf"/><stop offset="0.921" stop-color="#034aca"/><stop offset="0.947" stop-color="#0346c6"/><stop offset="0.974" stop-color="#0342c2"/><stop offset="1.000" stop-color="#033ebf"/></linearGradient><linearGradient id="r16" gradientUnits="userSpaceOnUse" x1="0" y1="0" x2="1026" y2="0"><stop offset="0.000" stop-color="#01b5fe"/><stop offset="0.026" stop-color="#01b5fe"/><stop offset="0.053" stop-color="#01b5fe"/><stop offset="0.079" stop-color="#01b5fe"/><stop offset="0.105" stop-color="#00b4fe"/><stop offset="0.132" stop-color="#00b4fe"/><stop offset="0.158" stop-color="#00b4fd"/><stop offset="0.184" stop-color="#00b3fd"/><stop offset="0.211" stop-color="#01b3fd"/><stop offset="0.237" stop-color="#01b2fc"/><stop offset="0.263" stop-color="#01b1fb"/><stop offset="0.289" stop-color="#01affb"/><stop offset="0.316" stop-color="#01adfa"/><stop offset="0.342" stop-color="#01abf9"/><stop offset="0.368" stop-color="#01a9f8"/><stop offset="0.395" stop-color="#01a6f7"/><stop offset="0.421" stop-color="#01a3f6"/><stop offset="0.447" stop-color="#01a0f5"/><stop offset="0.474" stop-color="#019df5"/><stop offset="0.500" stop-color="#019af5"/><stop offset="0.526" stop-color="#0197f4"/><stop offset="0.553" stop-color="#0194f5"/><stop offset="0.579" stop-color="#0191f5"/><stop offset="0.605" stop-color="#028df5"/><stop offset="0.632" stop-color="#0288f3"/><stop offset="0.658" stop-color="#0282f0"/><stop offset="0.684" stop-color="#037cee"/><stop offset="0.711" stop-color="#0376ec"/><stop offset="0.737" stop-color="#0370e9"/><stop offset="0.763" stop-color="#0369e7"/><stop offset="0.789" stop-color="#0362e4"/><stop offset="0.816" stop-color="#045ce0"/><stop offset="0.842" stop-color="#0457dc"/><stop offset="0.868" stop-color="#0352d6"/><stop offset="0.895" stop-color="#034ed1"/><stop offset="0.921" stop-color="#034acb"/><stop offset="0.947" stop-color="#0345c7"/><stop offset="0.974" stop-color="#0341c2"/><stop offset="1.000" stop-color="#033ebf"/></linearGradient><linearGradient id="r17" gradientUnits="userSpaceOnUse" x1="0" y1="0" x2="1026" y2="0"><stop offset="0.000" stop-color="#01b5fe"/><stop offset="0.026" stop-color="#01b5fe"/><stop offset="0.053" stop-color="#01b5fe"/><stop offset="0.079" stop-color="#01b5fe"/><stop offset="0.105" stop-color="#01b5fe"/><stop offset="0.132" stop-color="#01b5fe"/><stop offset="0.158" stop-color="#01b5fe"/><stop offset="0.184" stop-color="#01b4fd"/><stop offset="0.211" stop-color="#01b4fd"/><stop offset="0.237" stop-color="#01b3fc"/><stop offset="0.263" stop-color="#01b2fc"/><stop offset="0.289" stop-color="#01b1fb"/><stop offset="0.316" stop-color="#01affa"/><stop offset="0.342" stop-color="#01adf9"/><stop offset="0.368" stop-color="#01aaf8"/><stop offset="0.395" stop-color="#01a7f7"/><stop offset="0.421" stop-color="#02a4f7"/><stop offset="0.447" stop-color="#02a1f6"/><stop offset="0.474" stop-color="#019ef5"/><stop offset="0.500" stop-color="#019af4"/><stop offset="0.526" stop-color="#0196f3"/><stop offset="0.553" stop-color="#0193f2"/><stop offset="0.579" stop-color="#018ff3"/><stop offset="0.605" stop-color="#018bf2"/><stop offset="0.632" stop-color="#0287f1"/><stop offset="0.658" stop-color="#0283f0"/><stop offset="0.684" stop-color="#027eee"/><stop offset="0.711" stop-color="#0378ed"/><stop offset="0.737" stop-color="#0372eb"/><stop offset="0.763" stop-color="#036ae8"/><stop offset="0.789" stop-color="#0363e5"/><stop offset="0.816" stop-color="#045de2"/><stop offset="0.842" stop-color="#0457dd"/><stop offset="0.868" stop-color="#0452d8"/><stop offset="0.895" stop-color="#044ed1"/><stop offset="0.921" stop-color="#0449cc"/><stop offset="0.947" stop-color="#0345c7"/><stop offset="0.974" stop-color="#0341c2"/><stop offset="1.000" stop-color="#033dbe"/></linearGradient><linearGradient id="r18" gradientUnits="userSpaceOnUse" x1="0" y1="0" x2="1026" y2="0"><stop offset="0.000" stop-color="#01b6fe"/><stop offset="0.026" stop-color="#01b6fe"/><stop offset="0.053" stop-color="#01b6fe"/><stop offset="0.079" stop-color="#01b6fe"/><stop offset="0.105" stop-color="#01b6fe"/><stop offset="0.132" stop-color="#01b6fe"/><stop offset="0.158" stop-color="#01b5fe"/><stop offset="0.184" stop-color="#01b5fe"/><stop offset="0.211" stop-color="#01b5fd"/><stop offset="0.237" stop-color="#01b4fd"/><stop offset="0.263" stop-color="#01b3fc"/><stop offset="0.289" stop-color="#01b2fc"/><stop offset="0.316" stop-color="#01b0fb"/><stop offset="0.342" stop-color="#01aefa"/><stop offset="0.368" stop-color="#01acf9"/><stop offset="0.395" stop-color="#01a9f8"/><stop offset="0.421" stop-color="#02a6f7"/><stop offset="0.447" stop-color="#02a2f6"/><stop offset="0.474" stop-color="#029ef5"/><stop offset="0.500" stop-color="#029af3"/><stop offset="0.526" stop-color="#0296f2"/><stop offset="0.553" stop-color="#0292f1"/><stop offset="0.579" stop-color="#018ff1"/><stop offset="0.605" stop-color="#018bf0"/><stop offset="0.632" stop-color="#0288ef"/><stop offset="0.658" stop-color="#0285ef"/><stop offset="0.684" stop-color="#0281ee"/><stop offset="0.711" stop-color="#027bed"/><stop offset="0.737" stop-color="#0373eb"/><stop offset="0.763" stop-color="#036be8"/><stop offset="0.789" stop-color="#0363e5"/><stop offset="0.816" stop-color="#045ce2"/><stop offset="0.842" stop-color="#0457dd"/><stop offset="0.868" stop-color="#0452d7"/><stop offset="0.895" stop-color="#044dd1"/><stop offset="0.921" stop-color="#0449cb"/><stop offset="0.947" stop-color="#0445c6"/><stop offset="0.974" stop-color="#0341c1"/><stop offset="1.000" stop-color="#033dbd"/></linearGradient><linearGradient id="r19" gradientUnits="userSpaceOnUse" x1="0" y1="0" x2="1026" y2="0"><stop offset="0.000" stop-color="#01b6fd"/><stop offset="0.026" stop-color="#01b6fe"/><stop offset="0.053" stop-color="#01b6fe"/><stop offset="0.079" stop-color="#01b6fe"/><stop offset="0.105" stop-color="#01b6fe"/><stop offset="0.132" stop-color="#01b6fe"/><stop offset="0.158" stop-color="#01b6fe"/><stop offset="0.184" stop-color="#01b6fe"/><stop offset="0.211" stop-color="#01b5fd"/><stop offset="0.237" stop-color="#01b5fd"/><stop offset="0.263" stop-color="#01b4fc"/><stop offset="0.289" stop-color="#01b3fc"/><stop offset="0.316" stop-color="#01b1fb"/><stop offset="0.342" stop-color="#01affb"/><stop offset="0.368" stop-color="#01adfa"/><stop offset="0.395" stop-color="#01aaf9"/><stop offset="0.421" stop-color="#02a6f8"/><stop offset="0.447" stop-color="#02a3f6"/><stop offset="0.474" stop-color="#029ff5"/><stop offset="0.500" stop-color="#029bf4"/><stop offset="0.526" stop-color="#0297f2"/><stop offset="0.553" stop-color="#0293f2"/><stop offset="0.579" stop-color="#018ff1"/><stop offset="0.605" stop-color="#018cf0"/><stop offset="0.632" stop-color="#0289ef"/><stop offset="0.658" stop-color="#0287ee"/><stop offset="0.684" stop-color="#0283ee"/><stop offset="0.711" stop-color="#027dec"/><stop offset="0.737" stop-color="#0274ea"/><stop offset="0.763" stop-color="#036be7"/><stop offset="0.789" stop-color="#0363e3"/><stop offset="0.816" stop-color="#045ce0"/><stop offset="0.842" stop-color="#0456db"/><stop offset="0.868" stop-color="#0451d5"/><stop offset="0.895" stop-color="#044dcf"/><stop offset="0.921" stop-color="#0448c9"/><stop offset="0.947" stop-color="#0444c4"/><stop offset="0.974" stop-color="#0340c0"/><stop offset="1.000" stop-color="#033cbc"/></linearGradient><linearGradient id="r20" gradientUnits="userSpaceOnUse" x1="0" y1="0" x2="1026" y2="0"><stop offset="0.000" stop-color="#01b6fd"/><stop offset="0.026" stop-color="#01b6fd"/><stop offset="0.053" stop-color="#01b6fd"/><stop offset="0.079" stop-color="#01b6fd"/><stop offset="0.105" stop-color="#01b6fe"/><stop offset="0.132" stop-color="#01b6fe"/><stop offset="0.158" stop-color="#01b6fe"/><stop offset="0.184" stop-color="#01b6fe"/><stop offset="0.211" stop-color="#01b6fd"/><stop offset="0.237" stop-color="#01b5fd"/><stop offset="0.263" stop-color="#01b5fc"/><stop offset="0.289" stop-color="#01b3fc"/><stop offset="0.316" stop-color="#01b2fb"/><stop offset="0.342" stop-color="#01b0fb"/><stop offset="0.368" stop-color="#01aefa"/><stop offset="0.395" stop-color="#01abf9"/><stop offset="0.421" stop-color="#02a7f8"/><stop offset="0.447" stop-color="#02a3f7"/><stop offset="0.474" stop-color="#029ff5"/><stop offset="0.500" stop-color="#029bf4"/><stop offset="0.526" stop-color="#0297f3"/><stop offset="0.553" stop-color="#0294f3"/><stop offset="0.579" stop-color="#0191f2"/><stop offset="0.605" stop-color="#018ef1"/><stop offset="0.632" stop-color="#028bee"/><stop offset="0.658" stop-color="#0289ed"/><stop offset="0.684" stop-color="#0285ed"/><stop offset="0.711" stop-color="#027feb"/><stop offset="0.737" stop-color="#0275e8"/><stop offset="0.763" stop-color="#036ae4"/><stop offset="0.789" stop-color="#0361e0"/><stop offset="0.816" stop-color="#035adc"/><stop offset="0.842" stop-color="#0455d7"/><stop offset="0.868" stop-color="#0450d1"/><stop offset="0.895" stop-color="#044ccc"/><stop offset="0.921" stop-color="#0448c7"/><stop offset="0.947" stop-color="#0444c2"/><stop offset="0.974" stop-color="#0440be"/><stop offset="1.000" stop-color="#033cba"/></linearGradient><linearGradient id="r21" gradientUnits="userSpaceOnUse" x1="0" y1="0" x2="1026" y2="0"><stop offset="0.000" stop-color="#01b6fc"/><stop offset="0.026" stop-color="#01b6fd"/><stop offset="0.053" stop-color="#01b6fd"/><stop offset="0.079" stop-color="#01b6fd"/><stop offset="0.105" stop-color="#01b6fd"/><stop offset="0.132" stop-color="#01b6fd"/><stop offset="0.158" stop-color="#01b6fe"/><stop offset="0.184" stop-color="#01b6fd"/><stop offset="0.211" stop-color="#01b6fd"/><stop offset="0.237" stop-color="#01b6fd"/><stop offset="0.263" stop-color="#01b5fc"/><stop offset="0.289" stop-color="#01b4fc"/><stop offset="0.316" stop-color="#01b2fb"/><stop offset="0.342" stop-color="#01b1fb"/><stop offset="0.368" stop-color="#01aefa"/><stop offset="0.395" stop-color="#02abf9"/><stop offset="0.421" stop-color="#02a8f8"/><stop offset="0.447" stop-color="#02a4f6"/><stop offset="0.474" stop-color="#02a0f5"/><stop offset="0.500" stop-color="#029cf4"/><stop offset="0.526" stop-color="#0298f3"/><stop offset="0.553" stop-color="#0294f3"/><stop offset="0.579" stop-color="#0291f2"/><stop offset="0.605" stop-color="#028ef0"/><stop offset="0.632" stop-color="#028bec"/><stop offset="0.658" stop-color="#028aea"/><stop offset="0.684" stop-color="#0287eb"/><stop offset="0.711" stop-color="#0280e9"/><stop offset="0.737" stop-color="#0273e4"/><stop offset="0.763" stop-color="#0267df"/><stop offset="0.789" stop-color="#035edb"/><stop offset="0.816" stop-color="#0358d7"/><stop offset="0.842" stop-color="#0353d2"/><stop offset="0.868" stop-color="#044fcd"/><stop offset="0.895" stop-color="#044bc8"/><stop offset="0.921" stop-color="#0447c4"/><stop offset="0.947" stop-color="#0443c0"/><stop offset="0.974" stop-color="#043fbc"/><stop offset="1.000" stop-color="#043bb8"/></linearGradient><linearGradient id="r22" gradientUnits="userSpaceOnUse" x1="0" y1="0" x2="1026" y2="0"><stop offset="0.000" stop-color="#02b6fc"/><stop offset="0.026" stop-color="#01b6fc"/><stop offset="0.053" stop-color="#01b6fc"/><stop offset="0.079" stop-color="#01b6fc"/><stop offset="0.105" stop-color="#01b6fd"/><stop offset="0.132" stop-color="#01b6fd"/><stop offset="0.158" stop-color="#01b6fd"/><stop offset="0.184" stop-color="#01b6fd"/><stop offset="0.211" stop-color="#01b6fd"/><stop offset="0.237" stop-color="#01b6fc"/><stop offset="0.263" stop-color="#01b5fc"/><stop offset="0.289" stop-color="#01b4fb"/><stop offset="0.316" stop-color="#01b3fb"/><stop offset="0.342" stop-color="#01b1fa"/><stop offset="0.368" stop-color="#01aef9"/><stop offset="0.395" stop-color="#02abf8"/><stop offset="0.421" stop-color="#02a8f7"/><stop offset="0.447" stop-color="#02a4f6"/><stop offset="0.474" stop-color="#02a0f5"/><stop offset="0.500" stop-color="#029cf3"/><stop offset="0.526" stop-color="#0298f2"/><stop offset="0.553" stop-color="#0294f1"/><stop offset="0.579" stop-color="#0291f0"/><stop offset="0.605" stop-color="#028ded"/><stop offset="0.632" stop-color="#028ae8"/><stop offset="0.658" stop-color="#0188e7"/><stop offset="0.684" stop-color="#0186e8"/><stop offset="0.711" stop-color="#0280e7"/><stop offset="0.737" stop-color="#026edf"/><stop offset="0.763" stop-color="#0262d9"/><stop offset="0.789" stop-color="#025bd5"/><stop offset="0.816" stop-color="#0356d2"/><stop offset="0.842" stop-color="#0352cd"/><stop offset="0.868" stop-color="#034ec9"/><stop offset="0.895" stop-color="#044bc5"/><stop offset="0.921" stop-color="#0447c1"/><stop offset="0.947" stop-color="#0443be"/><stop offset="0.974" stop-color="#043fba"/><stop offset="1.000" stop-color="#043bb7"/></linearGradient><linearGradient id="r23" gradientUnits="userSpaceOnUse" x1="0" y1="0" x2="1026" y2="0"><stop offset="0.000" stop-color="#02b5fb"/><stop offset="0.026" stop-color="#01b5fb"/><stop offset="0.053" stop-color="#01b5fb"/><stop offset="0.079" stop-color="#01b6fc"/><stop offset="0.105" stop-color="#01b6fc"/><stop offset="0.132" stop-color="#01b6fd"/><stop offset="0.158" stop-color="#01b6fd"/><stop offset="0.184" stop-color="#01b6fd"/><stop offset="0.211" stop-color="#01b6fc"/><stop offset="0.237" stop-color="#01b6fc"/><stop offset="0.263" stop-color="#01b5fb"/><stop offset="0.289" stop-color="#01b4fb"/><stop offset="0.316" stop-color="#01b3fa"/><stop offset="0.342" stop-color="#01b1f9"/><stop offset="0.368" stop-color="#02aef8"/><stop offset="0.395" stop-color="#02abf7"/><stop offset="0.421" stop-color="#02a7f6"/><stop offset="0.447" stop-color="#02a3f5"/><stop offset="0.474" stop-color="#029ff4"/><stop offset="0.500" stop-color="#029bf2"/><stop offset="0.526" stop-color="#0297f1"/><stop offset="0.553" stop-color="#0293ef"/><stop offset="0.579" stop-color="#028fed"/><stop offset="0.605" stop-color="#028bea"/><stop offset="0.632" stop-color="#0188e6"/><stop offset="0.658" stop-color="#0185e5"/><stop offset="0.684" stop-color="#0181e4"/><stop offset="0.711" stop-color="#0178e1"/><stop offset="0.737" stop-color="#0168d9"/><stop offset="0.763" stop-color="#025ed4"/><stop offset="0.789" stop-color="#0258d0"/><stop offset="0.816" stop-color="#0354cd"/><stop offset="0.842" stop-color="#0350c9"/><stop offset="0.868" stop-color="#034dc5"/><stop offset="0.895" stop-color="#044ac2"/><stop offset="0.921" stop-color="#0446bf"/><stop offset="0.947" stop-color="#0442bc"/><stop offset="0.974" stop-color="#043eb9"/><stop offset="1.000" stop-color="#043bb6"/></linearGradient><linearGradient id="r24" gradientUnits="userSpaceOnUse" x1="0" y1="0" x2="1026" y2="0"><stop offset="0.000" stop-color="#02b5fa"/><stop offset="0.026" stop-color="#02b5fa"/><stop offset="0.053" stop-color="#01b5fb"/><stop offset="0.079" stop-color="#01b5fb"/><stop offset="0.105" stop-color="#01b5fb"/><stop offset="0.132" stop-color="#01b6fc"/><stop offset="0.158" stop-color="#01b6fc"/><stop offset="0.184" stop-color="#01b6fc"/><stop offset="0.211" stop-color="#01b6fc"/><stop offset="0.237" stop-color="#01b5fb"/><stop offset="0.263" stop-color="#01b4fa"/><stop offset="0.289" stop-color="#01b3fa"/><stop offset="0.316" stop-color="#01b2f9"/><stop offset="0.342" stop-color="#01b0f8"/><stop offset="0.368" stop-color="#02adf7"/><stop offset="0.395" stop-color="#02aaf6"/><stop offset="0.421" stop-color="#02a6f5"/><stop offset="0.447" stop-color="#02a2f4"/><stop offset="0.474" stop-color="#029ef2"/><stop offset="0.500" stop-color="#029af1"/><stop offset="0.526" stop-color="#0296ef"/><stop offset="0.553" stop-color="#0291ed"/><stop offset="0.579" stop-color="#028deb"/><stop offset="0.605" stop-color="#0289e7"/><stop offset="0.632" stop-color="#0185e4"/><stop offset="0.658" stop-color="#0180e2"/><stop offset="0.684" stop-color="#017bdf"/><stop offset="0.711" stop-color="#0171db"/><stop offset="0.737" stop-color="#0165d5"/><stop offset="0.763" stop-color="#025cd0"/><stop offset="0.789" stop-color="#0256cd"/><stop offset="0.816" stop-color="#0252c9"/><stop offset="0.842" stop-color="#034fc6"/><stop offset="0.868" stop-color="#034cc3"/><stop offset="0.895" stop-color="#0349c0"/><stop offset="0.921" stop-color="#0445bd"/><stop offset="0.947" stop-color="#0441ba"/><stop offset="0.974" stop-color="#043eb8"/><stop offset="1.000" stop-color="#043ab5"/></linearGradient><linearGradient id="r25" gradientUnits="userSpaceOnUse" x1="0" y1="0" x2="1026" y2="0"><stop offset="0.000" stop-color="#02b5f9"/><stop offset="0.026" stop-color="#02b5f9"/><stop offset="0.053" stop-color="#01b4fa"/><stop offset="0.079" stop-color="#01b5fa"/><stop offset="0.105" stop-color="#01b5fb"/><stop offset="0.132" stop-color="#02b5fb"/><stop offset="0.158" stop-color="#02b5fb"/><stop offset="0.184" stop-color="#01b5fb"/><stop offset="0.211" stop-color="#01b5fb"/><stop offset="0.237" stop-color="#01b5fa"/><stop offset="0.263" stop-color="#01b4f9"/><stop offset="0.289" stop-color="#01b3f8"/><stop offset="0.316" stop-color="#01b1f8"/><stop offset="0.342" stop-color="#02aff7"/><stop offset="0.368" stop-color="#02acf6"/><stop offset="0.395" stop-color="#02a9f4"/><stop offset="0.421" stop-color="#02a5f3"/><stop offset="0.447" stop-color="#02a1f2"/><stop offset="0.474" stop-color="#029df0"/><stop offset="0.500" stop-color="#0299ef"/><stop offset="0.526" stop-color="#0294ed"/><stop offset="0.553" stop-color="#0290eb"/><stop offset="0.579" stop-color="#028be8"/><stop offset="0.605" stop-color="#0286e5"/><stop offset="0.632" stop-color="#0281e2"/><stop offset="0.658" stop-color="#017cdf"/><stop offset="0.684" stop-color="#0175dc"/><stop offset="0.711" stop-color="#016dd7"/><stop offset="0.737" stop-color="#0164d2"/><stop offset="0.763" stop-color="#025cce"/><stop offset="0.789" stop-color="#0256ca"/><stop offset="0.816" stop-color="#0251c7"/><stop offset="0.842" stop-color="#034ec3"/><stop offset="0.868" stop-color="#034bc1"/><stop offset="0.895" stop-color="#0348be"/><stop offset="0.921" stop-color="#0344bc"/><stop offset="0.947" stop-color="#0441b9"/><stop offset="0.974" stop-color="#043db6"/><stop offset="1.000" stop-color="#043ab4"/></linearGradient><linearGradient id="r26" gradientUnits="userSpaceOnUse" x1="0" y1="0" x2="1026" y2="0"><stop offset="0.000" stop-color="#02b5f9"/><stop offset="0.026" stop-color="#02b4f8"/><stop offset="0.053" stop-color="#02b4f9"/><stop offset="0.079" stop-color="#01b4f9"/><stop offset="0.105" stop-color="#02b4f9"/><stop offset="0.132" stop-color="#02b5fa"/><stop offset="0.158" stop-color="#02b5fa"/><stop offset="0.184" stop-color="#02b5fa"/><stop offset="0.211" stop-color="#02b4f9"/><stop offset="0.237" stop-color="#01b4f9"/><stop offset="0.263" stop-color="#01b3f8"/><stop offset="0.289" stop-color="#01b2f7"/><stop offset="0.316" stop-color="#01b0f6"/><stop offset="0.342" stop-color="#02aef5"/><stop offset="0.368" stop-color="#02abf4"/><stop offset="0.395" stop-color="#02a8f3"/><stop offset="0.421" stop-color="#02a4f2"/><stop offset="0.447" stop-color="#02a0f0"/><stop offset="0.474" stop-color="#029cef"/><stop offset="0.500" stop-color="#0297ed"/><stop offset="0.526" stop-color="#0293eb"/><stop offset="0.553" stop-color="#028ee9"/><stop offset="0.579" stop-color="#0289e6"/><stop offset="0.605" stop-color="#0283e3"/><stop offset="0.632" stop-color="#027ee0"/><stop offset="0.658" stop-color="#0178dd"/><stop offset="0.684" stop-color="#0172d9"/><stop offset="0.711" stop-color="#016ad4"/><stop offset="0.737" stop-color="#0162d0"/><stop offset="0.763" stop-color="#025bcc"/><stop offset="0.789" stop-color="#0256c8"/><stop offset="0.816" stop-color="#0251c5"/><stop offset="0.842" stop-color="#024ec2"/><stop offset="0.868" stop-color="#034abf"/><stop offset="0.895" stop-color="#0347bd"/><stop offset="0.921" stop-color="#0344ba"/><stop offset="0.947" stop-color="#0440b8"/><stop offset="0.974" stop-color="#043db5"/><stop offset="1.000" stop-color="#0439b3"/></linearGradient><linearGradient id="r27" gradientUnits="userSpaceOnUse" x1="0" y1="0" x2="1026" y2="0"><stop offset="0.000" stop-color="#02b4f8"/><stop offset="0.026" stop-color="#02b4f7"/><stop offset="0.053" stop-color="#02b4f7"/><stop offset="0.079" stop-color="#01b4f8"/><stop offset="0.105" stop-color="#02b4f8"/><stop offset="0.132" stop-color="#02b4f9"/><stop offset="0.158" stop-color="#02b4f9"/><stop offset="0.184" stop-color="#02b4f9"/><stop offset="0.211" stop-color="#02b3f8"/><stop offset="0.237" stop-color="#02b3f8"/><stop offset="0.263" stop-color="#01b2f7"/><stop offset="0.289" stop-color="#01b0f6"/><stop offset="0.316" stop-color="#02aff5"/><stop offset="0.342" stop-color="#02acf4"/><stop offset="0.368" stop-color="#02a9f2"/><stop offset="0.395" stop-color="#02a6f1"/><stop offset="0.421" stop-color="#02a2f0"/><stop offset="0.447" stop-color="#029eee"/><stop offset="0.474" stop-color="#029aed"/><stop offset="0.500" stop-color="#0296eb"/><stop offset="0.526" stop-color="#0291e9"/><stop offset="0.553" stop-color="#028ce7"/><stop offset="0.579" stop-color="#0287e4"/><stop offset="0.605" stop-color="#0281e1"/><stop offset="0.632" stop-color="#017cde"/><stop offset="0.658" stop-color="#0176da"/><stop offset="0.684" stop-color="#016fd7"/><stop offset="0.711" stop-color="#0169d2"/><stop offset="0.737" stop-color="#0162ce"/><stop offset="0.763" stop-color="#015bca"/><stop offset="0.789" stop-color="#0256c6"/><stop offset="0.816" stop-color="#0251c3"/><stop offset="0.842" stop-color="#024dc0"/><stop offset="0.868" stop-color="#034abe"/><stop offset="0.895" stop-color="#0347bb"/><stop offset="0.921" stop-color="#0343b9"/><stop offset="0.947" stop-color="#0340b7"/><stop offset="0.974" stop-color="#043cb4"/><stop offset="1.000" stop-color="#0439b2"/></linearGradient><linearGradient id="r28" gradientUnits="userSpaceOnUse" x1="0" y1="0" x2="1026" y2="0"><stop offset="0.000" stop-color="#02b4f7"/><stop offset="0.026" stop-color="#02b4f7"/><stop offset="0.053" stop-color="#02b3f7"/><stop offset="0.079" stop-color="#02b3f7"/><stop offset="0.105" stop-color="#02b3f7"/><stop offset="0.132" stop-color="#02b3f7"/><stop offset="0.158" stop-color="#02b3f7"/><stop offset="0.184" stop-color="#02b3f7"/><stop offset="0.211" stop-color="#02b2f7"/><stop offset="0.237" stop-color="#02b2f6"/><stop offset="0.263" stop-color="#01b0f5"/><stop offset="0.289" stop-color="#01aff4"/><stop offset="0.316" stop-color="#02adf3"/><stop offset="0.342" stop-color="#02abf2"/><stop offset="0.368" stop-color="#02a8f1"/><stop offset="0.395" stop-color="#02a4ef"/><stop offset="0.421" stop-color="#02a1ee"/><stop offset="0.447" stop-color="#029dec"/><stop offset="0.474" stop-color="#0299eb"/><stop offset="0.500" stop-color="#0294e9"/><stop offset="0.526" stop-color="#0290e7"/><stop offset="0.553" stop-color="#028be5"/><stop offset="0.579" stop-color="#0286e2"/><stop offset="0.605" stop-color="#0280df"/><stop offset="0.632" stop-color="#017adc"/><stop offset="0.658" stop-color="#0174d8"/><stop offset="0.684" stop-color="#016ed5"/><stop offset="0.711" stop-color="#0168d1"/><stop offset="0.737" stop-color="#0161cd"/><stop offset="0.763" stop-color="#015cc9"/><stop offset="0.789" stop-color="#0256c5"/><stop offset="0.816" stop-color="#0252c2"/><stop offset="0.842" stop-color="#024ebf"/><stop offset="0.868" stop-color="#034abd"/><stop offset="0.895" stop-color="#0346ba"/><stop offset="0.921" stop-color="#0343b8"/><stop offset="0.947" stop-color="#0340b6"/><stop offset="0.974" stop-color="#043cb3"/><stop offset="1.000" stop-color="#0439b1"/></linearGradient><linearGradient id="r29" gradientUnits="userSpaceOnUse" x1="0" y1="0" x2="1026" y2="0"><stop offset="0.000" stop-color="#02b4f6"/><stop offset="0.026" stop-color="#02b3f6"/><stop offset="0.053" stop-color="#02b3f6"/><stop offset="0.079" stop-color="#02b3f6"/><stop offset="0.105" stop-color="#02b3f6"/><stop offset="0.132" stop-color="#02b3f6"/><stop offset="0.158" stop-color="#02b2f6"/><stop offset="0.184" stop-color="#02b2f6"/><stop offset="0.211" stop-color="#01b1f5"/><stop offset="0.237" stop-color="#01b0f5"/><stop offset="0.263" stop-color="#01aff4"/><stop offset="0.289" stop-color="#01aef3"/><stop offset="0.316" stop-color="#01abf2"/><stop offset="0.342" stop-color="#01a9f1"/><stop offset="0.368" stop-color="#01a6ef"/><stop offset="0.395" stop-color="#01a3ee"/><stop offset="0.421" stop-color="#019fec"/><stop offset="0.447" stop-color="#029beb"/><stop offset="0.474" stop-color="#0297e9"/><stop offset="0.500" stop-color="#0293e7"/><stop offset="0.526" stop-color="#028fe5"/><stop offset="0.553" stop-color="#028ae3"/><stop offset="0.579" stop-color="#0285e0"/><stop offset="0.605" stop-color="#017fdd"/><stop offset="0.632" stop-color="#0179da"/><stop offset="0.658" stop-color="#0173d7"/><stop offset="0.684" stop-color="#016dd3"/><stop offset="0.711" stop-color="#0167cf"/><stop offset="0.737" stop-color="#0161cb"/><stop offset="0.763" stop-color="#015cc8"/><stop offset="0.789" stop-color="#0257c4"/><stop offset="0.816" stop-color="#0252c1"/><stop offset="0.842" stop-color="#024ebe"/><stop offset="0.868" stop-color="#024abc"/><stop offset="0.895" stop-color="#0346b9"/><stop offset="0.921" stop-color="#0343b7"/><stop offset="0.947" stop-color="#0340b5"/><stop offset="0.974" stop-color="#043cb2"/><stop offset="1.000" stop-color="#0439b0"/></linearGradient><linearGradient id="r30" gradientUnits="userSpaceOnUse" x1="0" y1="0" x2="1026" y2="0"><stop offset="0.000" stop-color="#02b4f5"/><stop offset="0.026" stop-color="#02b3f5"/><stop offset="0.053" stop-color="#02b3f5"/><stop offset="0.079" stop-color="#02b2f5"/><stop offset="0.105" stop-color="#02b2f5"/><stop offset="0.132" stop-color="#02b2f5"/><stop offset="0.158" stop-color="#02b1f5"/><stop offset="0.184" stop-color="#02b1f4"/><stop offset="0.211" stop-color="#01b0f4"/><stop offset="0.237" stop-color="#01aff3"/><stop offset="0.263" stop-color="#01aef2"/><stop offset="0.289" stop-color="#01acf1"/><stop offset="0.316" stop-color="#01aaf0"/><stop offset="0.342" stop-color="#01a7ef"/><stop offset="0.368" stop-color="#01a5ee"/><stop offset="0.395" stop-color="#01a1ec"/><stop offset="0.421" stop-color="#019eea"/><stop offset="0.447" stop-color="#019ae9"/><stop offset="0.474" stop-color="#0296e7"/><stop offset="0.500" stop-color="#0292e5"/><stop offset="0.526" stop-color="#028ee3"/><stop offset="0.553" stop-color="#0289e1"/><stop offset="0.579" stop-color="#0284df"/><stop offset="0.605" stop-color="#017edc"/><stop offset="0.632" stop-color="#0179d8"/><stop offset="0.658" stop-color="#0173d5"/><stop offset="0.684" stop-color="#016dd1"/><stop offset="0.711" stop-color="#0167ce"/><stop offset="0.737" stop-color="#0162ca"/><stop offset="0.763" stop-color="#015cc7"/><stop offset="0.789" stop-color="#0257c3"/><stop offset="0.816" stop-color="#0253c0"/><stop offset="0.842" stop-color="#024ebd"/><stop offset="0.868" stop-color="#024abb"/><stop offset="0.895" stop-color="#0347b8"/><stop offset="0.921" stop-color="#0343b6"/><stop offset="0.947" stop-color="#0340b4"/><stop offset="0.974" stop-color="#033cb1"/><stop offset="1.000" stop-color="#0439af"/></linearGradient><linearGradient id="r31" gradientUnits="userSpaceOnUse" x1="0" y1="0" x2="1026" y2="0"><stop offset="0.000" stop-color="#02b4f5"/><stop offset="0.026" stop-color="#02b3f4"/><stop offset="0.053" stop-color="#02b3f4"/><stop offset="0.079" stop-color="#02b2f4"/><stop offset="0.105" stop-color="#02b2f4"/><stop offset="0.132" stop-color="#02b1f4"/><stop offset="0.158" stop-color="#02b1f3"/><stop offset="0.184" stop-color="#02b0f3"/><stop offset="0.211" stop-color="#01aff3"/><stop offset="0.237" stop-color="#01aef2"/><stop offset="0.263" stop-color="#01acf1"/><stop offset="0.289" stop-color="#01abf0"/><stop offset="0.316" stop-color="#01a8ef"/><stop offset="0.342" stop-color="#01a6ed"/><stop offset="0.368" stop-color="#01a3ec"/><stop offset="0.395" stop-color="#01a0ea"/><stop offset="0.421" stop-color="#019ce9"/><stop offset="0.447" stop-color="#0199e7"/><stop offset="0.474" stop-color="#0295e5"/><stop offset="0.500" stop-color="#0291e4"/><stop offset="0.526" stop-color="#028de2"/><stop offset="0.553" stop-color="#0288df"/><stop offset="0.579" stop-color="#0283dd"/><stop offset="0.605" stop-color="#017eda"/><stop offset="0.632" stop-color="#0178d7"/><stop offset="0.658" stop-color="#0173d4"/><stop offset="0.684" stop-color="#016dd0"/><stop offset="0.711" stop-color="#0167cd"/><stop offset="0.737" stop-color="#0162c9"/><stop offset="0.763" stop-color="#015dc6"/><stop offset="0.789" stop-color="#0258c2"/><stop offset="0.816" stop-color="#0253bf"/><stop offset="0.842" stop-color="#024fbd"/><stop offset="0.868" stop-color="#024bba"/><stop offset="0.895" stop-color="#0347b8"/><stop offset="0.921" stop-color="#0343b5"/><stop offset="0.947" stop-color="#0340b3"/><stop offset="0.974" stop-color="#033cb1"/><stop offset="1.000" stop-color="#0439ae"/></linearGradient><linearGradient id="r32" gradientUnits="userSpaceOnUse" x1="0" y1="0" x2="1026" y2="0"><stop offset="0.000" stop-color="#02b4f4"/><stop offset="0.026" stop-color="#02b3f4"/><stop offset="0.053" stop-color="#02b2f3"/><stop offset="0.079" stop-color="#02b2f3"/><stop offset="0.105" stop-color="#02b1f3"/><stop offset="0.132" stop-color="#02b1f3"/><stop offset="0.158" stop-color="#02b0f2"/><stop offset="0.184" stop-color="#02aff2"/><stop offset="0.211" stop-color="#01aef1"/><stop offset="0.237" stop-color="#01adf1"/><stop offset="0.263" stop-color="#01abf0"/><stop offset="0.289" stop-color="#01a9ef"/><stop offset="0.316" stop-color="#01a7ed"/><stop offset="0.342" stop-color="#01a5ec"/><stop offset="0.368" stop-color="#01a2eb"/><stop offset="0.395" stop-color="#019fe9"/><stop offset="0.421" stop-color="#019be8"/><stop offset="0.447" stop-color="#0198e6"/><stop offset="0.474" stop-color="#0194e4"/><stop offset="0.500" stop-color="#0290e2"/><stop offset="0.526" stop-color="#028ce0"/><stop offset="0.553" stop-color="#0287de"/><stop offset="0.579" stop-color="#0283dc"/><stop offset="0.605" stop-color="#017dd9"/><stop offset="0.632" stop-color="#0178d6"/><stop offset="0.658" stop-color="#0172d2"/><stop offset="0.684" stop-color="#016dcf"/><stop offset="0.711" stop-color="#0167cc"/><stop offset="0.737" stop-color="#0162c8"/><stop offset="0.763" stop-color="#015dc5"/><stop offset="0.789" stop-color="#0258c2"/><stop offset="0.816" stop-color="#0253bf"/><stop offset="0.842" stop-color="#024fbc"/><stop offset="0.868" stop-color="#024bb9"/><stop offset="0.895" stop-color="#0347b7"/><stop offset="0.921" stop-color="#0343b5"/><stop offset="0.947" stop-color="#0340b2"/><stop offset="0.974" stop-color="#033cb0"/><stop offset="1.000" stop-color="#0339ae"/></linearGradient><linearGradient id="r33" gradientUnits="userSpaceOnUse" x1="0" y1="0" x2="1026" y2="0"><stop offset="0.000" stop-color="#02b4f4"/><stop offset="0.026" stop-color="#02b3f4"/><stop offset="0.053" stop-color="#02b2f3"/><stop offset="0.079" stop-color="#02b2f3"/><stop offset="0.105" stop-color="#02b1f3"/><stop offset="0.132" stop-color="#02b1f3"/><stop offset="0.158" stop-color="#02b0f2"/><stop offset="0.184" stop-color="#02aff2"/><stop offset="0.211" stop-color="#01aef1"/><stop offset="0.237" stop-color="#01adf1"/><stop offset="0.263" stop-color="#01abf0"/><stop offset="0.289" stop-color="#01a9ef"/><stop offset="0.316" stop-color="#01a7ed"/><stop offset="0.342" stop-color="#01a5ec"/><stop offset="0.368" stop-color="#01a2eb"/><stop offset="0.395" stop-color="#019fe9"/><stop offset="0.421" stop-color="#019be8"/><stop offset="0.447" stop-color="#0198e6"/><stop offset="0.474" stop-color="#0194e4"/><stop offset="0.500" stop-color="#0290e2"/><stop offset="0.526" stop-color="#028ce0"/><stop offset="0.553" stop-color="#0287de"/><stop offset="0.579" stop-color="#0283dc"/><stop offset="0.605" stop-color="#017dd9"/><stop offset="0.632" stop-color="#0178d6"/><stop offset="0.658" stop-color="#0172d2"/><stop offset="0.684" stop-color="#016dcf"/><stop offset="0.711" stop-color="#0167cc"/><stop offset="0.737" stop-color="#0162c8"/><stop offset="0.763" stop-color="#015dc5"/><stop offset="0.789" stop-color="#0258c2"/><stop offset="0.816" stop-color="#0253bf"/><stop offset="0.842" stop-color="#024fbc"/><stop offset="0.868" stop-color="#024bb9"/><stop offset="0.895" stop-color="#0347b7"/><stop offset="0.921" stop-color="#0343b5"/><stop offset="0.947" stop-color="#0340b2"/><stop offset="0.974" stop-color="#033cb0"/><stop offset="1.000" stop-color="#0339ae"/></linearGradient><linearGradient id="r34" gradientUnits="userSpaceOnUse" x1="0" y1="0" x2="1026" y2="0"><stop offset="0.000" stop-color="#02b4f4"/><stop offset="0.026" stop-color="#02b3f4"/><stop offset="0.053" stop-color="#02b2f3"/><stop offset="0.079" stop-color="#02b2f3"/><stop offset="0.105" stop-color="#02b1f3"/><stop offset="0.132" stop-color="#02b1f3"/><stop offset="0.158" stop-color="#02b0f2"/><stop offset="0.184" stop-color="#02aff2"/><stop offset="0.211" stop-color="#01aef1"/><stop offset="0.237" stop-color="#01adf1"/><stop offset="0.263" stop-color="#01abf0"/><stop offset="0.289" stop-color="#01a9ef"/><stop offset="0.316" stop-color="#01a7ed"/><stop offset="0.342" stop-color="#01a5ec"/><stop offset="0.368" stop-color="#01a2eb"/><stop offset="0.395" stop-color="#019fe9"/><stop offset="0.421" stop-color="#019be8"/><stop offset="0.447" stop-color="#0198e6"/><stop offset="0.474" stop-color="#0194e4"/><stop offset="0.500" stop-color="#0290e2"/><stop offset="0.526" stop-color="#028ce0"/><stop offset="0.553" stop-color="#0287de"/><stop offset="0.579" stop-color="#0283dc"/><stop offset="0.605" stop-color="#017dd9"/><stop offset="0.632" stop-color="#0178d6"/><stop offset="0.658" stop-color="#0172d2"/><stop offset="0.684" stop-color="#016dcf"/><stop offset="0.711" stop-color="#0167cc"/><stop offset="0.737" stop-color="#0162c8"/><stop offset="0.763" stop-color="#015dc5"/><stop offset="0.789" stop-color="#0258c2"/><stop offset="0.816" stop-color="#0253bf"/><stop offset="0.842" stop-color="#024fbc"/><stop offset="0.868" stop-color="#024bb9"/><stop offset="0.895" stop-color="#0347b7"/><stop offset="0.921" stop-color="#0343b5"/><stop offset="0.947" stop-color="#0340b2"/><stop offset="0.974" stop-color="#033cb0"/><stop offset="1.000" stop-color="#0339ae"/></linearGradient><filter id="fv" x="-10%" y="-10%" width="120%" height="120%"><feGaussianBlur stdDeviation="6 14"/></filter></defs><g filter="url(#fv)"><rect x="-40" y="-48" width="1106" height="25" fill="url(#r0)"/><rect x="-40" y="-24" width="1106" height="25" fill="url(#r1)"/><rect x="-40" y="0" width="1106" height="25" fill="url(#r2)"/><rect x="-40" y="24" width="1106" height="25" fill="url(#r3)"/><rect x="-40" y="48" width="1106" height="25" fill="url(#r4)"/><rect x="-40" y="72" width="1106" height="25" fill="url(#r5)"/><rect x="-40" y="96" width="1106" height="25" fill="url(#r6)"/><rect x="-40" y="120" width="1106" height="25" fill="url(#r7)"/><rect x="-40" y="144" width="1106" height="25" fill="url(#r8)"/><rect x="-40" y="168" width="1106" height="25" fill="url(#r9)"/><rect x="-40" y="192" width="1106" height="25" fill="url(#r10)"/><rect x="-40" y="216" width="1106" height="25" fill="url(#r11)"/><rect x="-40" y="240" width="1106" height="25" fill="url(#r12)"/><rect x="-40" y="264" width="1106" height="25" fill="url(#r13)"/><rect x="-40" y="288" width="1106" height="25" fill="url(#r14)"/><rect x="-40" y="312" width="1106" height="25" fill="url(#r15)"/><rect x="-40" y="336" width="1106" height="25" fill="url(#r16)"/><rect x="-40" y="360" width="1106" height="25" fill="url(#r17)"/><rect x="-40" y="384" width="1106" height="25" fill="url(#r18)"/><rect x="-40" y="408" width="1106" height="25" fill="url(#r19)"/><rect x="-40" y="432" width="1106" height="25" fill="url(#r20)"/><rect x="-40" y="456" width="1106" height="25" fill="url(#r21)"/><rect x="-40" y="480" width="1106" height="25" fill="url(#r22)"/><rect x="-40" y="504" width="1106" height="25" fill="url(#r23)"/><rect x="-40" y="528" width="1106" height="25" fill="url(#r24)"/><rect x="-40" y="552" width="1106" height="25" fill="url(#r25)"/><rect x="-40" y="576" width="1106" height="25" fill="url(#r26)"/><rect x="-40" y="600" width="1106" height="25" fill="url(#r27)"/><rect x="-40" y="624" width="1106" height="25" fill="url(#r28)"/><rect x="-40" y="648" width="1106" height="25" fill="url(#r29)"/><rect x="-40" y="672" width="1106" height="25" fill="url(#r30)"/><rect x="-40" y="696" width="1106" height="25" fill="url(#r31)"/><rect x="-40" y="720" width="1106" height="25" fill="url(#r32)"/><rect x="-40" y="744" width="1106" height="25" fill="url(#r33)"/><rect x="-40" y="768" width="1106" height="25" fill="url(#r34)"/></g>

<defs>
<filter id="b1" x="-5%" y="-50%" width="110%" height="200%"><feGaussianBlur stdDeviation="0.8"/></filter>
<filter id="b2" x="-5%" y="-50%" width="110%" height="200%"><feGaussianBlur stdDeviation="2"/></filter>
<filter id="b3" x="-20%" y="-20%" width="140%" height="140%"><feGaussianBlur stdDeviation="3"/></filter>
<radialGradient id="gl1" cx="0.5" cy="0.5" r="0.5"><stop offset="0" stop-color="#3a90ff" stop-opacity="0.35"/><stop offset="1" stop-color="#3a90ff" stop-opacity="0"/></radialGradient>
<linearGradient id="fadeR" x1="0" y1="0" x2="1" y2="0"><stop offset="0" stop-color="#fff" stop-opacity="0"/><stop offset="0.5" stop-color="#fff" stop-opacity="0.4"/><stop offset="1" stop-color="#fff" stop-opacity="1"/></linearGradient>
<mask id="mR" maskUnits="userSpaceOnUse" x="-50" y="-100" width="1000" height="200"><rect x="0" y="-100" width="860" height="200" fill="url(#fadeR)"/></mask>
<linearGradient id="bandB" x1="0" y1="0" x2="0" y2="1"><stop offset="0" stop-color="#6ad0ff" stop-opacity="0.10"/><stop offset="1" stop-color="#6ad0ff" stop-opacity="0"/></linearGradient>
<linearGradient id="bandA" x1="0" y1="1" x2="0" y2="0"><stop offset="0" stop-color="#0040a0" stop-opacity="0.10"/><stop offset="1" stop-color="#0040a0" stop-opacity="0"/></linearGradient>
</defs>
<radialGradient id="gl2" cx="823" cy="292" r="75" gradientUnits="userSpaceOnUse"><stop offset="0" stop-color="#0a6cff" stop-opacity="1"/><stop offset="0.5" stop-color="#0866ff" stop-opacity="0.5"/><stop offset="1" stop-color="#0862ff" stop-opacity="0"/></radialGradient>
<circle cx="823" cy="292" r="75" fill="url(#gl2)"/>
<linearGradient id="gl3" x1="823" y1="0" x2="880" y2="0" gradientUnits="userSpaceOnUse"><stop offset="0" stop-color="#0862ff" stop-opacity="0.25"/><stop offset="1" stop-color="#0862ff" stop-opacity="0"/></linearGradient>
<rect x="823" y="300" width="60" height="180" fill="url(#gl3)" filter="url(#b3)"/>
<!-- upper ray with step band -->
<g transform="translate(0,54) rotate(15.93)">
  <g mask="url(#mR)">
    <rect x="0" y="0" width="856" height="50" fill="url(#bandB)"/>
    <rect x="0" y="-40" width="856" height="40" fill="url(#bandA)"/>
  </g>
  <rect x="0" y="-0.7" width="856" height="1.4" fill="#70d4ff" opacity="0.35" filter="url(#b1)"/>
</g>
<!-- lower rays -->
<linearGradient id="fadeL1" x1="0" y1="0" x2="638" y2="0" gradientUnits="userSpaceOnUse"><stop offset="0.25" stop-color="#6ad4ff" stop-opacity="0"/><stop offset="1" stop-color="#6ad4ff" stop-opacity="1"/></linearGradient>
<line x1="638" y1="453" x2="0" y2="531" stroke="url(#fadeL1)" stroke-width="1.4" opacity="0.35" filter="url(#b1)"/>
<line x1="638" y1="455" x2="0" y2="534" stroke="url(#fadeL1)" stroke-width="6" opacity="0.12" filter="url(#b2)"/>
<linearGradient id="fadeL2" x1="68" y1="0" x2="823" y2="0" gradientUnits="userSpaceOnUse"><stop offset="0.3" stop-color="#0a50b0" stop-opacity="0"/><stop offset="1" stop-color="#0a50b0" stop-opacity="1"/></linearGradient>
<line x1="823" y1="481" x2="68" y2="730" stroke="url(#fadeL2)" stroke-width="8" opacity="0.10" filter="url(#b2)"/>
<!-- logo -->
<g>
  <polygon points="638,315 717,304.3 717,382 638,382" fill="#22a4ff"/>
  <polygon points="721,303.7 823,290 823,382 721,382" fill="#24acff"/>
  <polygon points="638,386 717,386 717,464.1 638,453" fill="#22a4ff"/>
  <polygon points="721,386 823,386 823,479 721,464.6" fill="#24a8ff"/>
  <polygon points="638,453 717,442 717,464.1" fill="#2298f4"/>
  <polygon points="721,441.5 823,427 823,479 721,464.6" fill="#2298f4"/>
</g>
<rect x="717" y="304" width="4" height="161" fill="#0a84e8"/>
<rect x="638" y="382" width="185" height="4" fill="#0a84e8"/>
<g fill="none" stroke="#44c0ff" stroke-width="0.8" opacity="0.6">
  <line x1="716.5" y1="305" x2="716.5" y2="381.5"/><line x1="721.5" y1="304" x2="721.5" y2="381.5"/>
  <line x1="716.5" y1="386.5" x2="716.5" y2="463.5"/><line x1="721.5" y1="386.5" x2="721.5" y2="464"/>
  <line x1="639" y1="381.5" x2="716" y2="381.5"/><line x1="722" y1="381.5" x2="822" y2="381.5"/>
  <line x1="639" y1="386.5" x2="716" y2="386.5"/><line x1="722" y1="386.5" x2="822" y2="386.5"/>
</g>
<g fill="none" stroke-linecap="square">
  <line x1="638.5" y1="316" x2="638.5" y2="452.5" stroke="#6ff0ff" stroke-width="1.5" opacity="0.8"/>
  <line x1="822.5" y1="291" x2="822.5" y2="478.5" stroke="#8cfcff" stroke-width="2.2" opacity="1"/>
  <polyline points="638,315.5 717,304.8" stroke="#5fd8ff" stroke-width="1.1" opacity="0.5"/>
  <polyline points="721,304.2 823,290.5" stroke="#6fe8ff" stroke-width="1.2" opacity="0.75"/>
  <polyline points="638,452.5 717,463.6" stroke="#5fe0ff" stroke-width="1.2" opacity="0.6"/>
  <polyline points="721,464.1 823,478.5" stroke="#6fe8ff" stroke-width="1.3" opacity="0.8"/>
  <polyline points="638,453 717,442" stroke="#5fd8ff" stroke-width="1" opacity="0.45"/>
  <polyline points="721,441.5 823,427" stroke="#5fd8ff" stroke-width="1" opacity="0.45"/>
</g>

</svg>
<style>
.lbl{position:absolute;white-space:nowrap;line-height:1;color:#fff;font-size:12px;text-shadow:0 0 1.5px #000,0 0 2px rgba(0,0,0,0.8),1px 1px 1px #000;}
.mi{position:absolute;left:33px;white-space:nowrap;line-height:1;font-size:12px;color:#111;}
</style>
<!-- recycle bin -->
<svg style="left:16px;top:5px" width="48" height="50" viewBox="0 0 48 50">
  <defs>
    <linearGradient id="rbL" x1="0" y1="0" x2="0" y2="1"><stop offset="0" stop-color="#eef4f8"/><stop offset="0.7" stop-color="#e6eef2"/><stop offset="1" stop-color="#f0e4e0"/></linearGradient>
    <linearGradient id="rbR" x1="0" y1="0" x2="0" y2="1"><stop offset="0" stop-color="#d4e4ee"/><stop offset="1" stop-color="#c8dce6"/></linearGradient>
  </defs>
  <path d="M5.1 10.7 L26.5 17.3 L25.5 46 L9.4 40.8 Z" fill="url(#rbL)"/>
  <path d="M26.5 17.3 L42.6 12.2 L37.8 42.9 L25.5 46 Z" fill="url(#rbR)"/>
  <path d="M5.1 10.7 L21.4 5.1 L42.6 12.2 L26.5 17.3 Z" fill="#a6c6da" stroke="#f4fbff" stroke-width="1"/>
  <g>
    <path d="M11.69 25.80 A5.2 5.2 0 0 1 17.75 22.98" stroke="#1a6cc4" stroke-width="2.8" fill="none"/>
    <path d="M18.42 20.47 L19.87 23.55 L17.07 25.49 Z" fill="#1a6cc4"/>
    <path d="M20.66 25.02 A5.2 5.2 0 0 1 20.08 31.68" stroke="#1a6cc4" stroke-width="2.8" fill="none"/>
    <path d="M21.92 33.52 L18.52 33.23 L18.24 29.84 Z" fill="#1a6cc4"/>
    <path d="M16.85 33.18 A5.2 5.2 0 0 1 11.38 29.35" stroke="#1a6cc4" stroke-width="2.8" fill="none"/>
    <path d="M8.87 30.02 L10.81 27.22 L13.89 28.67 Z" fill="#1a6cc4"/>
  </g>
</svg>
<div class="lbl" style="left:21px;top:61px;font-size:12.5px;letter-spacing:0.6px;">回收站</div>
<!-- edge -->
<svg style="left:14px;top:103px" width="52" height="52" viewBox="0 0 52 52">
  <defs>
    <linearGradient id="eg1" x1="0.1" y1="0.2" x2="0.95" y2="0.6"><stop offset="0" stop-color="#2a9ee2"/><stop offset="0.45" stop-color="#2cc0d8"/><stop offset="1" stop-color="#62d84e"/></linearGradient>
    <linearGradient id="eg2" x1="0" y1="0" x2="1" y2="1"><stop offset="0" stop-color="#1f6fc8"/><stop offset="1" stop-color="#1a4a9c"/></linearGradient>
  </defs>
  <g id="edgeg"><path d="M2.1 22.8 A24 24 0 0 1 49.6 30 C49.2 34, 47.8 37, 46 39 C42 45, 35 48, 28 47.8 C20 47.5, 13 44, 8 39 C4 34, 2 28, 2.1 22.8 Z" fill="url(#eg1)"/>
  <path d="M2.1 22.8 C5 16, 14 12.5, 22 14.5 C25 15.5, 27 17.5, 28 19.5 C25 19, 22.5 20, 21 22 C17 26, 15 32, 15.6 37 C16 42, 20 46.5, 28 47.8 C20 47.5, 13 44, 8 39 C4 34, 2 28, 2.1 22.8 Z" fill="#1f7ad8"/>
  <path d="M21 22 C22.5 20, 25 19, 28 19.5 C30 22, 31 25, 32 27.5 C33.5 31.5, 36.5 34, 40.5 34 C44.5 34, 47.5 32.5, 49.6 30 C49.2 34, 47.8 37, 46 39 C42 40, 36 40.5, 31 39 C26 37.5, 22 33, 21 28 C20.6 26, 20.6 24, 21 22 Z" fill="#28aaee"/>
  <path d="M21 22 C20.6 24, 20.6 26, 21 28 C22 33, 26 37.5, 31 39 C36 40.5, 42 40, 46 39 C42 45, 35 48, 28 47.8 C21 47.5, 16.5 43, 15.6 37 C15 31, 17 25.5, 21 22 Z" fill="url(#eg2)"/></g>
  <rect x="2" y="38.2" width="12.6" height="12.2" fill="#fff"/>
  <path d="M5 48 C4.5 44, 6 42, 10 41.5" stroke="#2a4a7a" stroke-width="2" fill="none"/><path d="M8.5 39.5 L12 41.5 L9 44z" fill="#2a4a7a"/>
</svg>
<div class="lbl" style="left:12px;top:159px;font-size:13px;letter-spacing:0.35px;">Microsoft</div>
<div class="lbl" style="left:25px;top:175px;font-size:13px;letter-spacing:0.35px;">Edge</div>
<!-- this pc selected -->
<div class="a" style="left:2px;top:204px;width:77px;height:70px;background:rgba(170,225,255,0.26);border:1px solid rgba(160,225,255,0.55);"></div>
<svg style="left:14px;top:205px" width="50" height="48" viewBox="0 0 50 48">
  <defs><linearGradient id="scr" x1="0" y1="0" x2="1" y2="1"><stop offset="0" stop-color="#4ab0f0"/><stop offset="1" stop-color="#6cc8fa"/></linearGradient></defs>
  <path d="M16.3 4.6 L45.9 14.8 L45.9 37 L16.3 25 Z" fill="url(#scr)" stroke="#1a3c60" stroke-width="1.3"/>
  <path d="M24 32.7 L35 31 L42 36.5 L31 38.5 Z" fill="#dde6ee"/>
  <path d="M5.1 36.7 L15.3 33.9 L35.2 40.8 L27.6 44.9 Z" fill="#f4f8fb" stroke="#9ab0c0" stroke-width="0.5"/>
  <path d="M8 36 L30 43.5 M11 35 L33 42.3 M13 38.6 L19 35.2 M18 40.3 L24 37 M23 42 L29 38.8" stroke="#b8c8d4" stroke-width="0.6"/>
</svg>
<div class="lbl" style="left:21px;top:258px;font-size:12.5px;letter-spacing:0.6px;">此电脑</div>
<!-- context menu -->
<div class="a" style="left:49px;top:221px;width:258px;height:260px;background:#eeeeee;border:1px solid #a8a8a8;box-shadow:2px 2px 2px rgba(0,0,40,0.45);">
  <div class="a" style="left:0;top:231px;width:255px;height:24px;background:#fafafa;"></div>
  <div class="mi" style="top:9px;font-weight:bold;">打开(O)</div>
  <div class="mi" style="top:32px;">固定到快速访问</div>
  <div class="mi" style="top:55px;">管理(G)</div>
  <div class="mi" style="top:78px;">固定到“开始”屏幕(P)</div>
  <div class="a" style="left:10px;top:98px;width:236px;height:1px;background:#a0a0a0;"></div>
  <div class="mi" style="top:108px;">映射网络驱动器(N)...</div>
  <div class="mi" style="top:131px;">断开网络驱动器的连接(C)...</div>
  <div class="a" style="left:10px;top:151px;width:236px;height:1px;background:#a0a0a0;"></div>
  <div class="mi" style="top:161px;">创建快捷方式(S)</div>
  <div class="mi" style="top:184px;">删除(D)</div>
  <div class="mi" style="top:207px;">重命名(M)</div>
  <div class="a" style="left:10px;top:227px;width:236px;height:1px;background:#a0a0a0;"></div>
  <div class="mi" style="top:238px;">属性(R)</div>
</div>
<!-- cursor -->
<svg style="left:243px;top:469px" width="14" height="21" viewBox="0 0 14 21">
  <path d="M1 1 L1 16 L4.5 12.5 L7.5 19.5 L10 18.5 L7 11.5 L12 11.5 Z" fill="#fff" stroke="#000" stroke-width="1"/>
</svg>

</div>
<div class="a" style="left:1073px;top:143px;width:1px;height:768px;background:#2a4a8a;"></div>
<div class="a" style="left:48px;top:142px;width:1026px;height:1px;background:#c6f2ff;"></div>
<div class="a" style="left:48px;top:143px;width:1026px;height:1px;background:rgba(10,60,110,0.35);"></div>
<!-- taskbar -->
<div class="a" style="left:48px;top:871px;width:1026px;height:40px;background:#02131f;"></div>
<svg style="left:65px;top:884px" width="16" height="15" viewBox="0 0 16 15" fill="#fff"><path d="M0 2.2 L7 1.2 V7 H0Z M8 1.05 L16 0 V7 H8Z M0 8 H7 V13.8 L0 12.8Z M8 8 H16 V15 L8 13.95Z"/></svg>
<div class="a" style="left:97px;top:871px;width:320px;height:40px;background:#f2f2f2;"></div>
<svg style="left:109px;top:882px" width="17" height="17" viewBox="0 0 17 17" fill="none" stroke="#222" stroke-width="1.3"><circle cx="10.5" cy="6.5" r="5.5"/><path d="M6.5 10.5 L1 16"/></svg>
<div class="t" style="left:137px;top:885px;font-size:14px;color:#333;">在此键入进行搜索</div>
<svg style="left:433px;top:883px" width="16" height="16" viewBox="0 0 16 16"><circle cx="8" cy="8" r="6.8" fill="none" stroke="#fff" stroke-width="2"/></svg>
<svg style="left:480px;top:883px" width="19" height="16" viewBox="0 0 19 16" fill="none" stroke="#fff" stroke-width="1.4"><path d="M0.7 1 H14 M0.7 15 H14 M3 3.8 H12 V12.2 H3 Z"/><path d="M17 1 V4 M17 6 V10 M17 12 V15" stroke-width="1.6"/></svg>
<svg style="left:527px;top:878px" width="25" height="25" viewBox="0 0 52 52"><use href="#edgeg"/></svg>
<svg style="left:577px;top:881px" width="23" height="19" viewBox="0 0 23 19">
  <path d="M0 1 H8 L10 3 H23 V19 H0Z" fill="#e8b84a"/><path d="M0 5 H23 V19 H0Z" fill="#f8d670"/>
  <path d="M6 19 V12 H17 V19 H14 V15 H9 V19Z" fill="#3a8ad8"/>
</svg>
<svg style="left:626px;top:879px" width="24" height="23" viewBox="0 0 24 23">
  <path d="M8 7 V4 A4 4 0 0 1 16 4 V7" fill="none" stroke="#fff" stroke-width="1.5"/>
  <rect x="0" y="6" width="24" height="17" fill="#fff"/>
  <rect x="6" y="9" width="5.5" height="5" fill="#f25022"/><rect x="12.5" y="9" width="5.5" height="5" fill="#7fba00"/>
  <rect x="6" y="15" width="5.5" height="5" fill="#00a4ef"/><rect x="12.5" y="15" width="5.5" height="5" fill="#ffb900"/>
</svg>
<svg style="left:675px;top:880px" width="24" height="20" viewBox="0 0 24 20">
  <path d="M0 7 L12 0 L24 7 V20 H0Z" fill="#fff"/><path d="M4 8.5 L22 7.5 L11 12 L13 16z" fill="#00101e"/>
</svg>
<!-- tray -->
<svg style="left:859px;top:886px" width="13" height="8" viewBox="0 0 13 8"><path d="M0.7 7.3 L6.5 1.2 L12.3 7.3" fill="none" stroke="#fff" stroke-width="1.3"/></svg>
<svg style="left:880px;top:884px" width="18" height="15" viewBox="0 0 18 15" fill="none" stroke="#fff" stroke-width="1.2"><rect x="4.6" y="0.6" width="12.8" height="9.8"/><path d="M11 10.5 V13.5 M7 14.4 H15"/><rect x="0.6" y="0.6" width="4" height="4"/><path d="M2.6 4.6 V14.4 H6"/></svg>
<svg style="left:904px;top:884px" width="18" height="16" viewBox="0 0 18 16"><path d="M0.7 4.5 H3.5 L8 0.8 V12.5 L3.5 9 H0.7Z" fill="none" stroke="#fff" stroke-width="1.2"/><circle cx="12.5" cy="10.5" r="4.8" fill="#e04040"/><path d="M10.5 8.5 L14.5 12.5 M14.5 8.5 L10.5 12.5" stroke="#fff" stroke-width="1.2"/></svg>
<div class="t" style="left:929px;top:884px;font-size:14px;color:#fff;">英</div>
<div class="t" style="left:968px;top:876px;font-size:12px;color:#fff;">10:10</div>
<div class="t" style="left:950px;top:894px;font-size:12px;letter-spacing:0.5px;color:#fff;">2020/10/31</div>
<svg style="left:1031px;top:882px" width="18" height="17" viewBox="0 0 18 17"><path d="M0.7 0.7 H17.3 V12.3 H11 L9 15.5 L7 12.3 H0.7Z" fill="none" stroke="#fff" stroke-width="1.2"/></svg>
<div class="a" style="left:1068px;top:871px;width:1px;height:40px;background:#3a4550;"></div>
<!-- status bar -->
<div class="a" style="left:48px;top:911px;width:1026px;height:21px;background:#f0f0f0;border-top:1px solid #6e6e6e;"></div>
<div class="t" style="left:48px;top:917px;font-size:12px;letter-spacing:0.25px;color:#111;">要将输入定向到该虚拟机，请在虚拟机内部单击或按 Ctrl+G。</div>
<svg style="left:941px;top:915px" width="80" height="16" viewBox="0 0 80 16" fill="none" stroke="#555" stroke-width="1.1">
  <path d="M1 9 L4 3 H12 L15 9 V13 H1Z M1 9 H15"/><circle cx="12.5" cy="12.5" r="2.8" fill="#7ab83a" stroke="none"/>
  <path d="M22 9 L25 3 H33 L36 9 V13 H22Z M22 9 H36"/><circle cx="33.5" cy="12.5" r="2.8" fill="#7ab83a" stroke="none"/>
  <circle cx="49" cy="8" r="6.5"/><circle cx="49" cy="8" r="1.8" fill="#555"/><circle cx="54.5" cy="12.5" r="2.8" fill="#7ab83a" stroke="none"/>
  <rect x="64" y="2" width="7" height="5"/><rect x="68" y="6" width="9" height="6"/><path d="M66 7 V13 H68" stroke-dasharray="1 1"/><circle cx="75.5" cy="12.5" r="2.8" fill="#7ab83a" stroke="none"/>
</svg>
<div class="a" style="left:1027px;top:914px;width:1px;height:16px;background:#c8c8c8;"></div>
<svg style="left:1036px;top:915px" width="15" height="15" viewBox="0 0 15 15"><path d="M0.7 0.7 H14.3 V10 L10 14.3 H0.7Z" fill="#3cd8c4" stroke="#1f5a54" stroke-width="1.2" stroke-linejoin="miter"/><path d="M10 14.3 V10 H14.3" fill="none" stroke="#1f5a54" stroke-width="1"/></svg>
<svg style="left:1061px;top:918px" width="12" height="12" viewBox="0 0 12 12" stroke="#999" stroke-width="1.2"><path d="M11.5 1 L1 11.5 M11.5 5 L5 11.5 M11.5 9 L9 11.5"/></svg>

<svg style="left:869px;top:937px" width="38" height="38" viewBox="0 0 38 38">
  <path d="M2 0 H35 A3 3 0 0 1 38 3 V27 A11 11 0 0 1 27 38 H0 V2 A2 2 0 0 1 2 0Z" fill="#3a9cee"/>
  <g transform="translate(19,19.5) rotate(15) scale(1.2) translate(-12,-11)">
  <path fill="#fff" d="M23.954 4.569c-.885.389-1.83.654-2.825.775 1.014-.611 1.794-1.574 2.163-2.723-.951.555-2.005.959-3.127 1.184-.896-.959-2.173-1.559-3.591-1.559-2.717 0-4.92 2.203-4.92 4.917 0 .39.045.765.127 1.124C7.691 8.094 4.066 6.13 1.64 3.161c-.427.722-.666 1.561-.666 2.475 0 1.71.87 3.213 2.188 4.096-.807-.026-1.566-.248-2.228-.616v.061c0 2.385 1.693 4.374 3.946 4.827-.413.111-.849.171-1.296.171-.314 0-.615-.03-.916-.086.631 1.953 2.445 3.377 4.604 3.417-1.68 1.319-3.809 2.105-6.102 2.105-.39 0-.779-.023-1.17-.067 2.189 1.394 4.768 2.209 7.557 2.209 9.054 0 13.999-7.496 13.999-13.986 0-.209 0-.42-.015-.63.961-.689 1.8-1.56 2.46-2.548l-.047-.02z"/>
  </g>
</svg>
<div class="t" style="left:912px;top:937px;font-size:25px;font-weight:bold;color:#5aa6ea;letter-spacing:-0.3px;">白云一键重装系统</div>
<div class="t" style="left:915px;top:963px;font-size:11px;font-weight:bold;color:#5a92cc;letter-spacing:3.3px;">www.baiyunxitong.com</div>

</body></html>
